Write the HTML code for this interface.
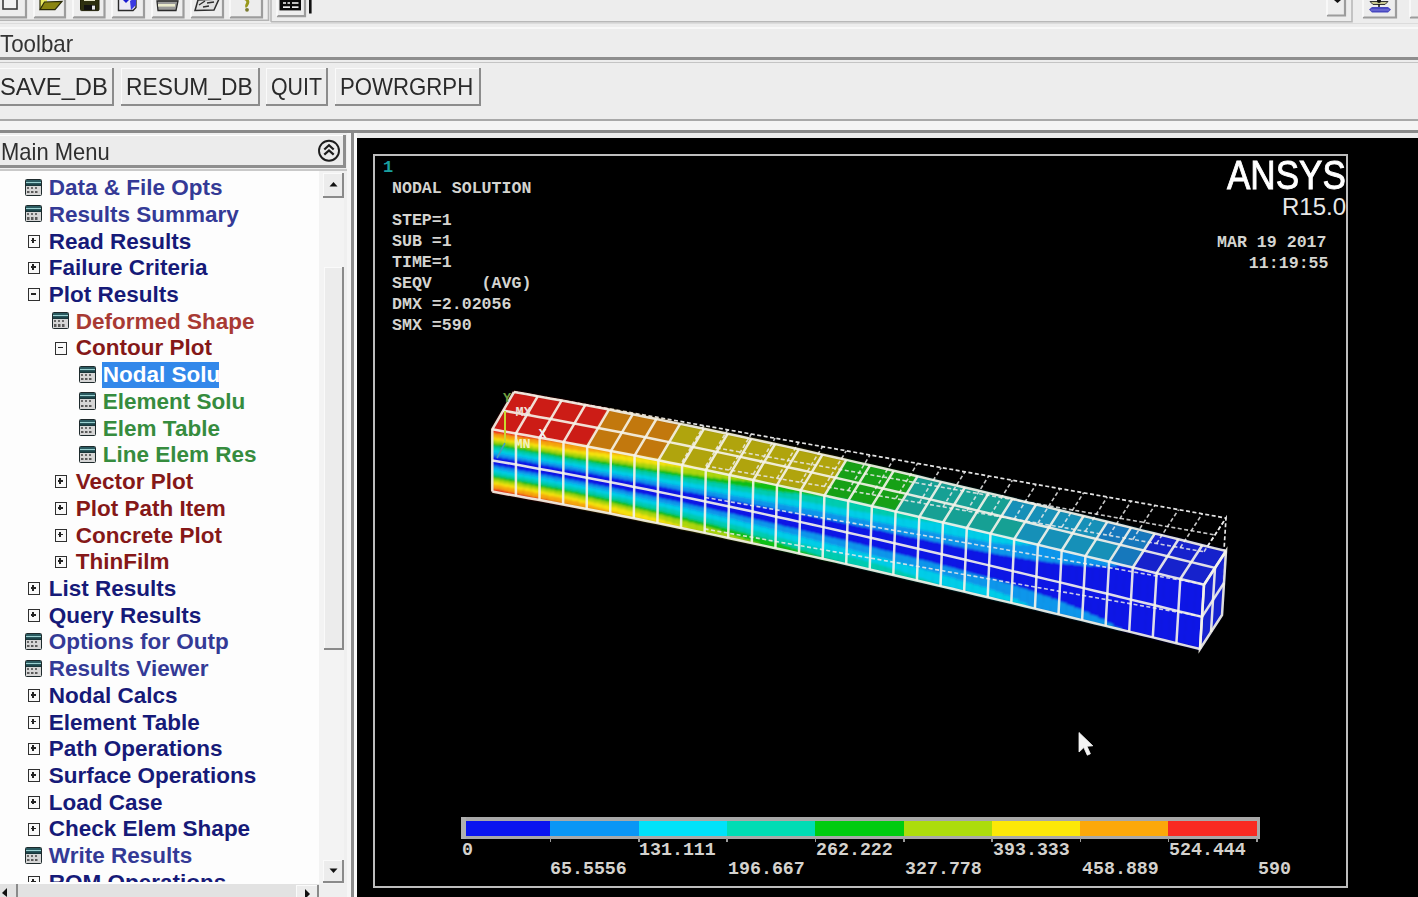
<!DOCTYPE html>
<html><head><meta charset="utf-8">
<style>
*{margin:0;padding:0;box-sizing:border-box}
html,body{width:1418px;height:897px;overflow:hidden;background:#ededed;font-family:"Liberation Sans",sans-serif;position:relative}
.a{position:absolute}
.tb{position:absolute;top:-6px;height:24px;width:33px;background:#ededed;border-right:3px solid #9a9a9a;border-bottom:3px solid #9a9a9a;box-shadow:inset 1px 1px 0 #fff}
.hl{position:absolute;left:0;width:1418px}
.btn{position:absolute;top:68px;height:38px;background:#ececec;border-right:2.5px solid #8c8c8c;border-bottom:2.5px solid #8c8c8c;box-shadow:inset 1px 1px 0 #fafafa}
.lbl{position:absolute;top:75px;font-size:24px;line-height:24px;color:#2a2a2a;white-space:nowrap;transform-origin:0 0}
.mi{position:absolute;font-weight:bold;font-size:22.5px;white-space:nowrap;line-height:26px}
.nv{color:#161a78}
.bl{color:#343a96}
.dr{color:#851818}
.lr{color:#a83a34}
.gr{color:#368c3e}
.ic{position:absolute;width:17px;height:17.3px;border:1.7px solid #1e2a2c;border-radius:1.5px;background:linear-gradient(to bottom,#2a5a60 0,#2a5a60 1.6px,#9ad0d0 1.6px,#9ad0d0 3.2px,#2a5a60 3.2px,#163438 5.6px,#d6d6d6 5.6px,#d6d6d6 100%)}
.ic:before{content:"";position:absolute;left:1.2px;top:7px;width:11px;height:2px;background:repeating-linear-gradient(to right,#6a6a6a 0,#6a6a6a 2px,transparent 2.2px,transparent 4px)}
.ic:after{content:"";position:absolute;left:1.2px;top:11.3px;width:11px;height:2.2px;background:repeating-linear-gradient(to right,#5a5a5a 0,#5a5a5a 2.4px,transparent 2.6px,transparent 4px)}
.pb{position:absolute;width:12.5px;height:12.8px;border:1.8px solid #303030;background:#f8f8f8}
.pb:before{content:"";position:absolute;left:2px;top:3.8px;width:5.3px;height:1.8px;background:#222}
.pb.p:after{content:"";position:absolute;left:3.75px;top:1.8px;width:1.8px;height:5.6px;background:#222}
.mono{font-family:"Liberation Mono",monospace;color:#d4d4d0;font-size:15px;position:absolute;white-space:pre;line-height:21px;font-weight:bold}
</style></head><body>

<!-- top toolbar -->
<svg class="a" style="left:0;top:0" width="1418" height="26" viewBox="0 0 1418 26">
<rect x="0" y="0" width="1418" height="26" fill="#ededed"/>
<g fill="none">
<!-- button frames: right/bottom shadows -->
<g stroke="#9c9c9c" stroke-width="2.2">
<path d="M26,0 V17.3 H-2"/>
<path d="M65,0 V17.3 H34"/>
<path d="M104.5,0 V17.3 H73"/>
<path d="M144,0 V17.3 H112"/>
<path d="M183.5,0 V17.3 H152"/>
<path d="M223,0 V17.3 H191"/>
<path d="M262,0 V17.3 H230"/>
<path d="M305,0 V16.2 H277"/>
<path d="M1345,0 V15.5 H1327"/>
<path d="M1396,0 V17.5 H1363"/>
<path d="M1420,0 V17.5 H1410"/>
</g>
<g stroke="#ffffff" stroke-width="1.2">
<path d="M-2,0.5 V0 M34,17 V0 M73,17 V0 M112,17 V0 M152,17 V0 M191,17 V0 M230,17 V0 M277,16 V0 M1327,15 V0 M1363,17 V0 M1410,17 V0"/>
</g>
<path d="M0,20.3 H268.5 V0" stroke="#b4b4b4" stroke-width="1.6"/>
<path d="M271,21.7 V0 M271,21.7 H1352 V0" stroke="#b8b8b8" stroke-width="1.6"/>
<path d="M0,23.5 H1418" stroke="#dcdcdc" stroke-width="1.2"/>
</g>
<!-- new doc -->
<rect x="3" y="-4" width="14" height="13" fill="#f2f2f2" stroke="#3a3a3a" stroke-width="1.6"/>
<!-- open folder -->
<path d="M40,-2 L47,-2 L47,9.5 L40,9.5 Z" fill="#e8e860"/>
<path d="M40,9.6 L44.5,2 L62,1.5 L55,9.6 Z" fill="#8a8410" stroke="#2a2a08" stroke-width="1.2"/>
<path d="M40,-1 V9.6" stroke="#2a2a08" stroke-width="1.2"/>
<!-- floppy -->
<rect x="80.5" y="-3" width="18.5" height="13.6" rx="1" fill="#2e3010" stroke="#202008" stroke-width="1"/>
<rect x="84" y="-3" width="11" height="4" fill="#e6e6c8"/>
<rect x="84" y="5" width="11.5" height="5" fill="#111"/>
<rect x="92" y="5.6" width="3" height="4" fill="#e8e8e8"/>
<!-- doc blue -->
<path d="M118.5,-2 H136 V7.5 L133,10.5 H118.5 Z" fill="#eceaf4" stroke="#2a2a2a" stroke-width="1.4"/>
<path d="M123,0 L126,-3 L129,0 L126,3 Z" fill="#1a1ad0"/>
<path d="M130,1 L136,-3 V5 L131,10 Z" fill="#3a3ae0"/>
<!-- printer -->
<path d="M157,1 H178 L176,10.5 H158 Z" fill="#9a9a9a" stroke="#2a2a2a" stroke-width="1.3"/>
<rect x="158" y="4" width="17" height="2.6" fill="#eaeacc"/>
<path d="M158,0 H178" stroke="#444" stroke-width="1.5"/>
<!-- notepad -->
<path d="M198,0 L219,-1 L214,10 L195,10.5 Z" fill="#e0e0e0" stroke="#2e2e2e" stroke-width="1.5"/>
<path d="M199,5 L205,1 M203,7 L209,6 M207,3 L214,2" stroke="#2e2e2e" stroke-width="1.4"/>
<!-- question -->
<path d="M243.5,-2 Q249,0 247.5,3.5 Q246,6 247,7" stroke="#98981a" stroke-width="3" fill="none"/>
<circle cx="247" cy="9.8" r="1.9" fill="#7a7a30"/>
<!-- grid icon -->
<rect x="279.5" y="-2" width="21.5" height="12.4" fill="#0c0c0c"/>
<rect x="283" y="2.2" width="3" height="1.6" fill="#eee"/><rect x="287.5" y="2.2" width="2.5" height="1.6" fill="#eee"/><rect x="292" y="2.2" width="6.5" height="1.6" fill="#eee"/>
<rect x="283" y="6.3" width="7" height="1.7" fill="#eee"/><rect x="292" y="6.3" width="6.5" height="1.7" fill="#eee"/>
<rect x="309" y="0" width="2.6" height="13.5" fill="#111"/>
<!-- dropdown arrow -->
<path d="M1334,0 L1341,0 L1337.5,3 Z" fill="#111"/>
<!-- layers icon -->
<path d="M1370,1.5 L1388,1.5 L1385,4.5 L1373,4.5 Z" fill="#c8c890" stroke="#333" stroke-width="1"/>
<circle cx="1379" cy="1" r="2" fill="#111"/>
<path d="M1379,4 V9" stroke="#111" stroke-width="1.5"/>
<path d="M1369,9.5 L1372,7 H1388 L1391,9.5 L1388,12.5 H1372 Z" fill="#4848c0"/>
<path d="M1371,10 H1389" stroke="#8080e0" stroke-width="1"/>
</svg>
<div class="hl" style="top:27px;height:2px;background:#f8f8f8"></div>
<div class="a" style="left:0;top:31.7px;font-size:24px;color:#333;line-height:24px;transform:scaleX(0.93);transform-origin:0 0">Toolbar</div>
<div class="hl" style="top:57px;height:2.5px;background:#8e8e8e"></div>
<div class="hl" style="top:61.5px;height:1.5px;background:#c4c4c4"></div>

<div class="btn" style="left:-3px;width:117px"></div>
<div class="btn" style="left:121px;width:139px"></div>
<div class="btn" style="left:266px;width:62px"></div>
<div class="btn" style="left:334.5px;width:146px"></div>
<div class="lbl" style="left:-0.5px;transform:scaleX(0.99)">SAVE_DB</div>
<div class="lbl" style="left:125.5px;transform:scaleX(0.95)">RESUM_DB</div>
<div class="lbl" style="left:271px;transform:scaleX(0.89)">QUIT</div>
<div class="lbl" style="left:339.5px;transform:scaleX(0.925)">POWRGRPH</div>
<div class="hl" style="top:119px;height:2px;background:#a8a8a8"></div>
<div class="hl" style="top:121px;height:9px;background:#f4f4f4"></div>
<div class="hl" style="top:130px;height:3px;background:#8a8a8a"></div>

<!-- main menu header -->
<div class="a" style="left:0;top:133px;width:352px;height:764px;background:#efefef"></div>
<div class="a" style="left:-2px;top:135px;width:348px;height:33px;background:#ececec;border-right:3px solid #8e8e8e;border-bottom:3px solid #8e8e8e;box-shadow:inset 1px 1px 0 #fff"></div>
<div class="a" style="left:0.5px;top:139.7px;font-size:24px;color:#2f2f2f;line-height:24px;transform:scaleX(0.915);transform-origin:0 0">Main Menu</div>
<svg class="a" style="left:317px;top:139px" width="24" height="24" viewBox="0 0 24 24"><circle cx="12" cy="11.7" r="10" fill="none" stroke="#1e1e1e" stroke-width="1.9"/><path d="M7.3,10.5 L12,6.3 L16.7,10.5 M7.3,15.6 L12,11.4 L16.7,15.6" fill="none" stroke="#1e1e1e" stroke-width="2.2"/></svg>

<!-- menu list -->
<div class="a" style="left:0;top:168.5px;width:347px;height:2px;background:#c9c9c9"></div>
<div class="a" style="left:0;top:170.5px;width:319px;height:713px;background:#fdfdfd"></div>
<div class="a" style="left:319px;top:170.5px;width:25px;height:713px;background:#f3f3f3"></div>
<div class="a" style="left:323px;top:172.5px;width:21px;height:25px;background:#ececec;border-right:2.5px solid #8a8a8a;border-bottom:2.5px solid #8a8a8a;box-shadow:inset 1px 1px 0 #fafafa"></div>
<svg class="a" style="left:328px;top:180px" width="11" height="8"><path d="M1.5,6.5 L5.5,2 L9.5,6.5 Z" fill="#111"/></svg>
<div class="a" style="left:324px;top:267px;width:20px;height:383px;background:#ececec;border-right:2.5px solid #8a8a8a;border-bottom:2.5px solid #8a8a8a;box-shadow:inset 1px 1px 0 #fafafa"></div>
<div class="a" style="left:323px;top:859.5px;width:21px;height:23px;background:#ececec;border-right:2.5px solid #8a8a8a;border-bottom:2.5px solid #8a8a8a;box-shadow:inset 1px 1px 0 #fafafa"></div>
<svg class="a" style="left:328px;top:867px" width="11" height="8"><path d="M1.5,1.5 L5.5,6 L9.5,1.5 Z" fill="#111"/></svg>
<div class="a" style="left:0;top:884px;width:319px;height:13px;background:#e2e2e2"></div>
<div class="a" style="left:16px;top:884px;width:2px;height:13px;background:#8a8a8a"></div>
<svg class="a" style="left:0;top:884px" width="12" height="13"><path d="M2,9 L7,4 L7,13 Z" fill="#111"/></svg>
<div class="a" style="left:295.5px;top:884.5px;width:23px;height:13px;background:#ececec;border-right:2.5px solid #8a8a8a;box-shadow:inset 1px 1px 0 #fafafa"></div>
<svg class="a" style="left:302px;top:888px" width="10" height="10"><path d="M3,1 L8,6 L3,11 Z" fill="#111"/></svg>
<div class="a" style="left:346.5px;top:133px;width:4.5px;height:764px;background:#f6f6f6"></div>
<div class="a" style="left:351px;top:133px;width:2.6px;height:764px;background:#8c8c8c"></div>
<div class="a" style="left:353.6px;top:133px;width:3.4px;height:764px;background:#fbfbfb"></div>
<div class="a" style="left:0;top:170px;width:319px;height:712px;overflow:hidden"><div class="a" style="left:0;top:-170px;width:319px;height:897px">
<div class="ic" style="left:24.5px;top:178.5px"></div>
<div class="mi bl" style="left:48.8px;top:175.1px">Data &amp; File Opts</div>
<div class="ic" style="left:24.5px;top:205.2px"></div>
<div class="mi bl" style="left:48.8px;top:201.8px">Results Summary</div>
<div class="pb p" style="left:27.5px;top:234.9px"></div>
<div class="mi nv" style="left:48.8px;top:228.5px">Read Results</div>
<div class="pb p" style="left:27.5px;top:261.7px"></div>
<div class="mi nv" style="left:48.8px;top:255.3px">Failure Criteria</div>
<div class="pb" style="left:27.5px;top:288.4px"></div>
<div class="mi nv" style="left:48.8px;top:282.0px">Plot Results</div>
<div class="ic" style="left:51.5px;top:312.1px"></div>
<div class="mi lr" style="left:75.8px;top:308.7px">Deformed Shape</div>
<div class="pb" style="left:54.5px;top:341.8px"></div>
<div class="mi dr" style="left:75.8px;top:335.4px">Contour Plot</div>
<div class="ic" style="left:78.5px;top:365.5px"></div>
<div class="a" style="left:101.8px;top:361.8px;width:117px;height:26px;background:#3388ea"></div>
<div class="mi" style="left:102.8px;top:362.1px;color:#fff">Nodal Solu</div>
<div class="ic" style="left:78.5px;top:392.3px"></div>
<div class="mi gr" style="left:102.8px;top:388.9px">Element Solu</div>
<div class="ic" style="left:78.5px;top:419.0px"></div>
<div class="mi gr" style="left:102.8px;top:415.6px">Elem Table</div>
<div class="ic" style="left:78.5px;top:445.7px"></div>
<div class="mi gr" style="left:102.8px;top:442.3px">Line Elem Res</div>
<div class="pb p" style="left:54.5px;top:475.4px"></div>
<div class="mi dr" style="left:75.8px;top:469.0px">Vector Plot</div>
<div class="pb p" style="left:54.5px;top:502.1px"></div>
<div class="mi dr" style="left:75.8px;top:495.7px">Plot Path Item</div>
<div class="pb p" style="left:54.5px;top:528.9px"></div>
<div class="mi dr" style="left:75.8px;top:522.5px">Concrete Plot</div>
<div class="pb p" style="left:54.5px;top:555.6px"></div>
<div class="mi dr" style="left:75.8px;top:549.2px">ThinFilm</div>
<div class="pb p" style="left:27.5px;top:582.3px"></div>
<div class="mi nv" style="left:48.8px;top:575.9px">List Results</div>
<div class="pb p" style="left:27.5px;top:609.0px"></div>
<div class="mi nv" style="left:48.8px;top:602.6px">Query Results</div>
<div class="ic" style="left:24.5px;top:632.7px"></div>
<div class="mi bl" style="left:48.8px;top:629.3px">Options for Outp</div>
<div class="ic" style="left:24.5px;top:659.5px"></div>
<div class="mi bl" style="left:48.8px;top:656.1px">Results Viewer</div>
<div class="pb p" style="left:27.5px;top:689.2px"></div>
<div class="mi nv" style="left:48.8px;top:682.8px">Nodal Calcs</div>
<div class="pb p" style="left:27.5px;top:715.9px"></div>
<div class="mi nv" style="left:48.8px;top:709.5px">Element Table</div>
<div class="pb p" style="left:27.5px;top:742.6px"></div>
<div class="mi nv" style="left:48.8px;top:736.2px">Path Operations</div>
<div class="pb p" style="left:27.5px;top:769.3px"></div>
<div class="mi nv" style="left:48.8px;top:762.9px">Surface Operations</div>
<div class="pb p" style="left:27.5px;top:796.1px"></div>
<div class="mi nv" style="left:48.8px;top:789.7px">Load Case</div>
<div class="pb p" style="left:27.5px;top:822.8px"></div>
<div class="mi nv" style="left:48.8px;top:816.4px">Check Elem Shape</div>
<div class="ic" style="left:24.5px;top:846.5px"></div>
<div class="mi bl" style="left:48.8px;top:843.1px">Write Results</div>
<div class="pb p" style="left:27.5px;top:876.2px"></div>
<div class="mi nv" style="left:48.8px;top:869.8px">ROM Operations</div>

</div></div>
<!-- graphics -->
<div class="a" style="left:357px;top:138px;width:1061px;height:759px;background:#000"></div>
<div class="a" style="left:373px;top:154px;width:975px;height:734px;border:2px solid #bdbdbd"></div>


<div class="a" style="left:383px;top:158.5px;font-family:'Liberation Mono',monospace;font-size:17px;color:#1aa0a0;line-height:17px;font-weight:bold">1</div>
<div class="mono" style="left:392px;top:179.5px;font-size:16.6px;line-height:17px">NODAL SOLUTION</div>
<div class="mono" style="left:392px;top:210px;font-size:16.6px;line-height:21.05px">STEP=1
SUB =1
TIME=1
SEQV     (AVG)
DMX =2.02056
SMX =590</div>
<div class="a" style="left:1227px;top:152.5px;font-size:40.5px;color:#fff;line-height:44px;transform:scaleX(0.865);transform-origin:0 0;-webkit-text-stroke:0.9px #fff">ANSYS</div>
<div class="a" style="left:1282px;top:194.5px;font-size:24px;color:#e8e8e8;line-height:24px">R15.0</div>
<div class="mono" style="left:1217px;top:232px;font-size:16.6px;line-height:21px">MAR 19 2017</div>
<div class="mono" style="left:1219px;top:253px;font-size:16.6px;line-height:21px">   11:19:55</div>
<!-- legend -->
<div class="a" style="left:461px;top:817px;width:799px;height:22px;background:#a8a8a8"></div>
<div class="a" style="left:462.0px;top:821px;width:88.5px;height:15px;background:#0a14f0"></div><div class="a" style="left:550.3px;top:821px;width:88.5px;height:15px;background:#0a96f5"></div><div class="a" style="left:638.6px;top:821px;width:88.5px;height:15px;background:#00e2fa"></div><div class="a" style="left:726.9px;top:821px;width:88.5px;height:15px;background:#00dcb4"></div><div class="a" style="left:815.2px;top:821px;width:88.5px;height:15px;background:#00cc10"></div><div class="a" style="left:903.5px;top:821px;width:88.5px;height:15px;background:#acdc0c"></div><div class="a" style="left:991.8px;top:821px;width:88.5px;height:15px;background:#fce808"></div><div class="a" style="left:1080.1px;top:821px;width:88.5px;height:15px;background:#fca80a"></div><div class="a" style="left:1168.4px;top:821px;width:88.5px;height:15px;background:#f82a22"></div>
<div class="a" style="left:461px;top:817px;width:5px;height:22px;background:#b0b0b0"></div>
<div class="a" style="left:549.8px;top:838px;width:1.5px;height:4px;background:#9a9a9a"></div><div class="a" style="left:638.1px;top:838px;width:1.5px;height:4px;background:#9a9a9a"></div><div class="a" style="left:726.4px;top:838px;width:1.5px;height:4px;background:#9a9a9a"></div><div class="a" style="left:814.7px;top:838px;width:1.5px;height:4px;background:#9a9a9a"></div><div class="a" style="left:903.0px;top:838px;width:1.5px;height:4px;background:#9a9a9a"></div><div class="a" style="left:991.3px;top:838px;width:1.5px;height:4px;background:#9a9a9a"></div><div class="a" style="left:1079.6px;top:838px;width:1.5px;height:4px;background:#9a9a9a"></div><div class="a" style="left:1167.9px;top:838px;width:1.5px;height:4px;background:#9a9a9a"></div><div class="a" style="left:1256.2px;top:838px;width:1.5px;height:4px;background:#9a9a9a"></div>
<div class="mono" style="left:462px;top:841px;font-size:18.3px;line-height:18.5px;color:#d4d2ce">0</div><div class="mono" style="left:639px;top:841px;font-size:18.3px;line-height:18.5px;color:#d4d2ce">131.111</div><div class="mono" style="left:816px;top:841px;font-size:18.3px;line-height:18.5px;color:#d4d2ce">262.222</div><div class="mono" style="left:993px;top:841px;font-size:18.3px;line-height:18.5px;color:#d4d2ce">393.333</div><div class="mono" style="left:1169px;top:841px;font-size:18.3px;line-height:18.5px;color:#d4d2ce">524.444</div><div class="mono" style="left:550px;top:859.5px;font-size:18.3px;line-height:18.5px;color:#d4d2ce">65.5556</div><div class="mono" style="left:728px;top:859.5px;font-size:18.3px;line-height:18.5px;color:#d4d2ce">196.667</div><div class="mono" style="left:905px;top:859.5px;font-size:18.3px;line-height:18.5px;color:#d4d2ce">327.778</div><div class="mono" style="left:1082px;top:859.5px;font-size:18.3px;line-height:18.5px;color:#d4d2ce">458.889</div><div class="mono" style="left:1258px;top:859.5px;font-size:18.3px;line-height:18.5px;color:#d4d2ce">590</div>
<!-- BEAMSTART -->
<svg class="a" style="left:0;top:0" width="1418" height="897" viewBox="0 0 1418 897">
<defs><filter id="bl" x="-5%" y="-5%" width="110%" height="110%"><feGaussianBlur stdDeviation="0.9"/></filter><filter id="bl2" x="-5%" y="-5%" width="110%" height="110%"><feGaussianBlur stdDeviation="0.45"/></filter><linearGradient id="g0" gradientUnits="userSpaceOnUse" x1="496.3" y1="430.0" x2="485.8" y2="490.5"><stop offset="0.000" stop-color="#ec2c1e"/><stop offset="0.060" stop-color="#ec2c1e"/><stop offset="0.060" stop-color="#f6a60c"/><stop offset="0.125" stop-color="#f6a60c"/><stop offset="0.125" stop-color="#f5e20a"/><stop offset="0.170" stop-color="#f5e20a"/><stop offset="0.170" stop-color="#acd60c"/><stop offset="0.220" stop-color="#acd60c"/><stop offset="0.220" stop-color="#10c018"/><stop offset="0.270" stop-color="#10c018"/><stop offset="0.270" stop-color="#00ccb0"/><stop offset="0.325" stop-color="#00ccb0"/><stop offset="0.325" stop-color="#00cde8"/><stop offset="0.375" stop-color="#00cde8"/><stop offset="0.375" stop-color="#0a96eb"/><stop offset="0.425" stop-color="#0a96eb"/><stop offset="0.425" stop-color="#0e18e6"/><stop offset="0.580" stop-color="#0e18e6"/><stop offset="0.580" stop-color="#0a96eb"/><stop offset="0.630" stop-color="#0a96eb"/><stop offset="0.630" stop-color="#00cde8"/><stop offset="0.680" stop-color="#00cde8"/><stop offset="0.680" stop-color="#00ccb0"/><stop offset="0.735" stop-color="#00ccb0"/><stop offset="0.735" stop-color="#10c018"/><stop offset="0.785" stop-color="#10c018"/><stop offset="0.785" stop-color="#acd60c"/><stop offset="0.835" stop-color="#acd60c"/><stop offset="0.835" stop-color="#f5e20a"/><stop offset="0.880" stop-color="#f5e20a"/><stop offset="0.880" stop-color="#f6a60c"/><stop offset="0.945" stop-color="#f6a60c"/><stop offset="0.945" stop-color="#ec2c1e"/><stop offset="1.000" stop-color="#ec2c1e"/></linearGradient><linearGradient id="g1" gradientUnits="userSpaceOnUse" x1="504.2" y1="431.4" x2="493.6" y2="491.8"><stop offset="0.000" stop-color="#ec2c1e"/><stop offset="0.055" stop-color="#ec2c1e"/><stop offset="0.055" stop-color="#f6a60c"/><stop offset="0.120" stop-color="#f6a60c"/><stop offset="0.120" stop-color="#f5e20a"/><stop offset="0.165" stop-color="#f5e20a"/><stop offset="0.165" stop-color="#acd60c"/><stop offset="0.215" stop-color="#acd60c"/><stop offset="0.215" stop-color="#10c018"/><stop offset="0.270" stop-color="#10c018"/><stop offset="0.270" stop-color="#00ccb0"/><stop offset="0.320" stop-color="#00ccb0"/><stop offset="0.320" stop-color="#00cde8"/><stop offset="0.370" stop-color="#00cde8"/><stop offset="0.370" stop-color="#0a96eb"/><stop offset="0.425" stop-color="#0a96eb"/><stop offset="0.425" stop-color="#0e18e6"/><stop offset="0.580" stop-color="#0e18e6"/><stop offset="0.580" stop-color="#0a96eb"/><stop offset="0.635" stop-color="#0a96eb"/><stop offset="0.635" stop-color="#00cde8"/><stop offset="0.685" stop-color="#00cde8"/><stop offset="0.685" stop-color="#00ccb0"/><stop offset="0.735" stop-color="#00ccb0"/><stop offset="0.735" stop-color="#10c018"/><stop offset="0.790" stop-color="#10c018"/><stop offset="0.790" stop-color="#acd60c"/><stop offset="0.840" stop-color="#acd60c"/><stop offset="0.840" stop-color="#f5e20a"/><stop offset="0.885" stop-color="#f5e20a"/><stop offset="0.885" stop-color="#f6a60c"/><stop offset="0.950" stop-color="#f6a60c"/><stop offset="0.950" stop-color="#ec2c1e"/><stop offset="1.000" stop-color="#ec2c1e"/></linearGradient><linearGradient id="g2" gradientUnits="userSpaceOnUse" x1="512.1" y1="432.7" x2="501.4" y2="493.2"><stop offset="0.000" stop-color="#ec2c1e"/><stop offset="0.050" stop-color="#ec2c1e"/><stop offset="0.050" stop-color="#f6a60c"/><stop offset="0.120" stop-color="#f6a60c"/><stop offset="0.120" stop-color="#f5e20a"/><stop offset="0.165" stop-color="#f5e20a"/><stop offset="0.165" stop-color="#acd60c"/><stop offset="0.215" stop-color="#acd60c"/><stop offset="0.215" stop-color="#10c018"/><stop offset="0.270" stop-color="#10c018"/><stop offset="0.270" stop-color="#00ccb0"/><stop offset="0.320" stop-color="#00ccb0"/><stop offset="0.320" stop-color="#00cde8"/><stop offset="0.370" stop-color="#00cde8"/><stop offset="0.370" stop-color="#0a96eb"/><stop offset="0.425" stop-color="#0a96eb"/><stop offset="0.425" stop-color="#0e18e6"/><stop offset="0.580" stop-color="#0e18e6"/><stop offset="0.580" stop-color="#0a96eb"/><stop offset="0.635" stop-color="#0a96eb"/><stop offset="0.635" stop-color="#00cde8"/><stop offset="0.685" stop-color="#00cde8"/><stop offset="0.685" stop-color="#00ccb0"/><stop offset="0.735" stop-color="#00ccb0"/><stop offset="0.735" stop-color="#10c018"/><stop offset="0.790" stop-color="#10c018"/><stop offset="0.790" stop-color="#acd60c"/><stop offset="0.840" stop-color="#acd60c"/><stop offset="0.840" stop-color="#f5e20a"/><stop offset="0.885" stop-color="#f5e20a"/><stop offset="0.885" stop-color="#f6a60c"/><stop offset="0.955" stop-color="#f6a60c"/><stop offset="0.955" stop-color="#ec2c1e"/><stop offset="1.000" stop-color="#ec2c1e"/></linearGradient><linearGradient id="g3" gradientUnits="userSpaceOnUse" x1="520.0" y1="434.1" x2="509.3" y2="494.6"><stop offset="0.000" stop-color="#ec2c1e"/><stop offset="0.050" stop-color="#ec2c1e"/><stop offset="0.050" stop-color="#f6a60c"/><stop offset="0.115" stop-color="#f6a60c"/><stop offset="0.115" stop-color="#f5e20a"/><stop offset="0.160" stop-color="#f5e20a"/><stop offset="0.160" stop-color="#acd60c"/><stop offset="0.215" stop-color="#acd60c"/><stop offset="0.215" stop-color="#10c018"/><stop offset="0.265" stop-color="#10c018"/><stop offset="0.265" stop-color="#00ccb0"/><stop offset="0.320" stop-color="#00ccb0"/><stop offset="0.320" stop-color="#00cde8"/><stop offset="0.370" stop-color="#00cde8"/><stop offset="0.370" stop-color="#0a96eb"/><stop offset="0.420" stop-color="#0a96eb"/><stop offset="0.420" stop-color="#0e18e6"/><stop offset="0.585" stop-color="#0e18e6"/><stop offset="0.585" stop-color="#0a96eb"/><stop offset="0.635" stop-color="#0a96eb"/><stop offset="0.635" stop-color="#00cde8"/><stop offset="0.685" stop-color="#00cde8"/><stop offset="0.685" stop-color="#00ccb0"/><stop offset="0.740" stop-color="#00ccb0"/><stop offset="0.740" stop-color="#10c018"/><stop offset="0.790" stop-color="#10c018"/><stop offset="0.790" stop-color="#acd60c"/><stop offset="0.845" stop-color="#acd60c"/><stop offset="0.845" stop-color="#f5e20a"/><stop offset="0.890" stop-color="#f5e20a"/><stop offset="0.890" stop-color="#f6a60c"/><stop offset="0.955" stop-color="#f6a60c"/><stop offset="0.955" stop-color="#ec2c1e"/><stop offset="1.000" stop-color="#ec2c1e"/></linearGradient><linearGradient id="g4" gradientUnits="userSpaceOnUse" x1="527.9" y1="435.5" x2="517.1" y2="496.0"><stop offset="0.000" stop-color="#ec2c1e"/><stop offset="0.045" stop-color="#ec2c1e"/><stop offset="0.045" stop-color="#f6a60c"/><stop offset="0.115" stop-color="#f6a60c"/><stop offset="0.115" stop-color="#f5e20a"/><stop offset="0.160" stop-color="#f5e20a"/><stop offset="0.160" stop-color="#acd60c"/><stop offset="0.210" stop-color="#acd60c"/><stop offset="0.210" stop-color="#10c018"/><stop offset="0.265" stop-color="#10c018"/><stop offset="0.265" stop-color="#00ccb0"/><stop offset="0.320" stop-color="#00ccb0"/><stop offset="0.320" stop-color="#00cde8"/><stop offset="0.370" stop-color="#00cde8"/><stop offset="0.370" stop-color="#0a96eb"/><stop offset="0.420" stop-color="#0a96eb"/><stop offset="0.420" stop-color="#0e18e6"/><stop offset="0.585" stop-color="#0e18e6"/><stop offset="0.585" stop-color="#0a96eb"/><stop offset="0.635" stop-color="#0a96eb"/><stop offset="0.635" stop-color="#00cde8"/><stop offset="0.685" stop-color="#00cde8"/><stop offset="0.685" stop-color="#00ccb0"/><stop offset="0.740" stop-color="#00ccb0"/><stop offset="0.740" stop-color="#10c018"/><stop offset="0.795" stop-color="#10c018"/><stop offset="0.795" stop-color="#acd60c"/><stop offset="0.845" stop-color="#acd60c"/><stop offset="0.845" stop-color="#f5e20a"/><stop offset="0.890" stop-color="#f5e20a"/><stop offset="0.890" stop-color="#f6a60c"/><stop offset="0.960" stop-color="#f6a60c"/><stop offset="0.960" stop-color="#ec2c1e"/><stop offset="1.000" stop-color="#ec2c1e"/></linearGradient><linearGradient id="g5" gradientUnits="userSpaceOnUse" x1="535.8" y1="437.0" x2="524.9" y2="497.4"><stop offset="0.000" stop-color="#ec2c1e"/><stop offset="0.040" stop-color="#ec2c1e"/><stop offset="0.040" stop-color="#f6a60c"/><stop offset="0.110" stop-color="#f6a60c"/><stop offset="0.110" stop-color="#f5e20a"/><stop offset="0.160" stop-color="#f5e20a"/><stop offset="0.160" stop-color="#acd60c"/><stop offset="0.210" stop-color="#acd60c"/><stop offset="0.210" stop-color="#10c018"/><stop offset="0.265" stop-color="#10c018"/><stop offset="0.265" stop-color="#00ccb0"/><stop offset="0.320" stop-color="#00ccb0"/><stop offset="0.320" stop-color="#00cde8"/><stop offset="0.370" stop-color="#00cde8"/><stop offset="0.370" stop-color="#0a96eb"/><stop offset="0.420" stop-color="#0a96eb"/><stop offset="0.420" stop-color="#0e18e6"/><stop offset="0.585" stop-color="#0e18e6"/><stop offset="0.585" stop-color="#0a96eb"/><stop offset="0.635" stop-color="#0a96eb"/><stop offset="0.635" stop-color="#00cde8"/><stop offset="0.685" stop-color="#00cde8"/><stop offset="0.685" stop-color="#00ccb0"/><stop offset="0.740" stop-color="#00ccb0"/><stop offset="0.740" stop-color="#10c018"/><stop offset="0.795" stop-color="#10c018"/><stop offset="0.795" stop-color="#acd60c"/><stop offset="0.845" stop-color="#acd60c"/><stop offset="0.845" stop-color="#f5e20a"/><stop offset="0.895" stop-color="#f5e20a"/><stop offset="0.895" stop-color="#f6a60c"/><stop offset="0.965" stop-color="#f6a60c"/><stop offset="0.965" stop-color="#ec2c1e"/><stop offset="1.000" stop-color="#ec2c1e"/></linearGradient><linearGradient id="g6" gradientUnits="userSpaceOnUse" x1="543.7" y1="438.4" x2="532.7" y2="498.8"><stop offset="0.000" stop-color="#ec2c1e"/><stop offset="0.035" stop-color="#ec2c1e"/><stop offset="0.035" stop-color="#f6a60c"/><stop offset="0.110" stop-color="#f6a60c"/><stop offset="0.110" stop-color="#f5e20a"/><stop offset="0.155" stop-color="#f5e20a"/><stop offset="0.155" stop-color="#acd60c"/><stop offset="0.205" stop-color="#acd60c"/><stop offset="0.205" stop-color="#10c018"/><stop offset="0.260" stop-color="#10c018"/><stop offset="0.260" stop-color="#00ccb0"/><stop offset="0.315" stop-color="#00ccb0"/><stop offset="0.315" stop-color="#00cde8"/><stop offset="0.370" stop-color="#00cde8"/><stop offset="0.370" stop-color="#0a96eb"/><stop offset="0.420" stop-color="#0a96eb"/><stop offset="0.420" stop-color="#0e18e6"/><stop offset="0.585" stop-color="#0e18e6"/><stop offset="0.585" stop-color="#0a96eb"/><stop offset="0.635" stop-color="#0a96eb"/><stop offset="0.635" stop-color="#00cde8"/><stop offset="0.690" stop-color="#00cde8"/><stop offset="0.690" stop-color="#00ccb0"/><stop offset="0.745" stop-color="#00ccb0"/><stop offset="0.745" stop-color="#10c018"/><stop offset="0.800" stop-color="#10c018"/><stop offset="0.800" stop-color="#acd60c"/><stop offset="0.850" stop-color="#acd60c"/><stop offset="0.850" stop-color="#f5e20a"/><stop offset="0.895" stop-color="#f5e20a"/><stop offset="0.895" stop-color="#f6a60c"/><stop offset="0.970" stop-color="#f6a60c"/><stop offset="0.970" stop-color="#ec2c1e"/><stop offset="1.000" stop-color="#ec2c1e"/></linearGradient><linearGradient id="g7" gradientUnits="userSpaceOnUse" x1="551.6" y1="439.8" x2="540.5" y2="500.3"><stop offset="0.000" stop-color="#ec2c1e"/><stop offset="0.030" stop-color="#ec2c1e"/><stop offset="0.030" stop-color="#f6a60c"/><stop offset="0.105" stop-color="#f6a60c"/><stop offset="0.105" stop-color="#f5e20a"/><stop offset="0.155" stop-color="#f5e20a"/><stop offset="0.155" stop-color="#acd60c"/><stop offset="0.205" stop-color="#acd60c"/><stop offset="0.205" stop-color="#10c018"/><stop offset="0.260" stop-color="#10c018"/><stop offset="0.260" stop-color="#00ccb0"/><stop offset="0.315" stop-color="#00ccb0"/><stop offset="0.315" stop-color="#00cde8"/><stop offset="0.370" stop-color="#00cde8"/><stop offset="0.370" stop-color="#0a96eb"/><stop offset="0.420" stop-color="#0a96eb"/><stop offset="0.420" stop-color="#0e18e6"/><stop offset="0.585" stop-color="#0e18e6"/><stop offset="0.585" stop-color="#0a96eb"/><stop offset="0.635" stop-color="#0a96eb"/><stop offset="0.635" stop-color="#00cde8"/><stop offset="0.690" stop-color="#00cde8"/><stop offset="0.690" stop-color="#00ccb0"/><stop offset="0.745" stop-color="#00ccb0"/><stop offset="0.745" stop-color="#10c018"/><stop offset="0.800" stop-color="#10c018"/><stop offset="0.800" stop-color="#acd60c"/><stop offset="0.850" stop-color="#acd60c"/><stop offset="0.850" stop-color="#f5e20a"/><stop offset="0.900" stop-color="#f5e20a"/><stop offset="0.900" stop-color="#f6a60c"/><stop offset="0.975" stop-color="#f6a60c"/><stop offset="0.975" stop-color="#ec2c1e"/><stop offset="1.000" stop-color="#ec2c1e"/></linearGradient><linearGradient id="g8" gradientUnits="userSpaceOnUse" x1="559.5" y1="441.3" x2="548.4" y2="501.7"><stop offset="0.000" stop-color="#ec2c1e"/><stop offset="0.025" stop-color="#ec2c1e"/><stop offset="0.025" stop-color="#f6a60c"/><stop offset="0.105" stop-color="#f6a60c"/><stop offset="0.105" stop-color="#f5e20a"/><stop offset="0.150" stop-color="#f5e20a"/><stop offset="0.150" stop-color="#acd60c"/><stop offset="0.205" stop-color="#acd60c"/><stop offset="0.205" stop-color="#10c018"/><stop offset="0.260" stop-color="#10c018"/><stop offset="0.260" stop-color="#00ccb0"/><stop offset="0.315" stop-color="#00ccb0"/><stop offset="0.315" stop-color="#00cde8"/><stop offset="0.365" stop-color="#00cde8"/><stop offset="0.365" stop-color="#0a96eb"/><stop offset="0.420" stop-color="#0a96eb"/><stop offset="0.420" stop-color="#0e18e6"/><stop offset="0.585" stop-color="#0e18e6"/><stop offset="0.585" stop-color="#0a96eb"/><stop offset="0.640" stop-color="#0a96eb"/><stop offset="0.640" stop-color="#00cde8"/><stop offset="0.690" stop-color="#00cde8"/><stop offset="0.690" stop-color="#00ccb0"/><stop offset="0.745" stop-color="#00ccb0"/><stop offset="0.745" stop-color="#10c018"/><stop offset="0.800" stop-color="#10c018"/><stop offset="0.800" stop-color="#acd60c"/><stop offset="0.855" stop-color="#acd60c"/><stop offset="0.855" stop-color="#f5e20a"/><stop offset="0.900" stop-color="#f5e20a"/><stop offset="0.900" stop-color="#f6a60c"/><stop offset="0.980" stop-color="#f6a60c"/><stop offset="0.980" stop-color="#ec2c1e"/><stop offset="1.000" stop-color="#ec2c1e"/></linearGradient><linearGradient id="g9" gradientUnits="userSpaceOnUse" x1="567.4" y1="442.8" x2="556.2" y2="503.2"><stop offset="0.000" stop-color="#ec2c1e"/><stop offset="0.020" stop-color="#ec2c1e"/><stop offset="0.020" stop-color="#f6a60c"/><stop offset="0.100" stop-color="#f6a60c"/><stop offset="0.100" stop-color="#f5e20a"/><stop offset="0.150" stop-color="#f5e20a"/><stop offset="0.150" stop-color="#acd60c"/><stop offset="0.200" stop-color="#acd60c"/><stop offset="0.200" stop-color="#10c018"/><stop offset="0.255" stop-color="#10c018"/><stop offset="0.255" stop-color="#00ccb0"/><stop offset="0.315" stop-color="#00ccb0"/><stop offset="0.315" stop-color="#00cde8"/><stop offset="0.365" stop-color="#00cde8"/><stop offset="0.365" stop-color="#0a96eb"/><stop offset="0.420" stop-color="#0a96eb"/><stop offset="0.420" stop-color="#0e18e6"/><stop offset="0.585" stop-color="#0e18e6"/><stop offset="0.585" stop-color="#0a96eb"/><stop offset="0.640" stop-color="#0a96eb"/><stop offset="0.640" stop-color="#00cde8"/><stop offset="0.690" stop-color="#00cde8"/><stop offset="0.690" stop-color="#00ccb0"/><stop offset="0.750" stop-color="#00ccb0"/><stop offset="0.750" stop-color="#10c018"/><stop offset="0.805" stop-color="#10c018"/><stop offset="0.805" stop-color="#acd60c"/><stop offset="0.855" stop-color="#acd60c"/><stop offset="0.855" stop-color="#f5e20a"/><stop offset="0.905" stop-color="#f5e20a"/><stop offset="0.905" stop-color="#f6a60c"/><stop offset="0.985" stop-color="#f6a60c"/><stop offset="0.985" stop-color="#ec2c1e"/><stop offset="1.000" stop-color="#ec2c1e"/></linearGradient><linearGradient id="g10" gradientUnits="userSpaceOnUse" x1="575.3" y1="444.2" x2="564.0" y2="504.6"><stop offset="0.000" stop-color="#ec2c1e"/><stop offset="0.010" stop-color="#ec2c1e"/><stop offset="0.010" stop-color="#f6a60c"/><stop offset="0.095" stop-color="#f6a60c"/><stop offset="0.095" stop-color="#f5e20a"/><stop offset="0.145" stop-color="#f5e20a"/><stop offset="0.145" stop-color="#acd60c"/><stop offset="0.200" stop-color="#acd60c"/><stop offset="0.200" stop-color="#10c018"/><stop offset="0.255" stop-color="#10c018"/><stop offset="0.255" stop-color="#00ccb0"/><stop offset="0.310" stop-color="#00ccb0"/><stop offset="0.310" stop-color="#00cde8"/><stop offset="0.365" stop-color="#00cde8"/><stop offset="0.365" stop-color="#0a96eb"/><stop offset="0.420" stop-color="#0a96eb"/><stop offset="0.420" stop-color="#0e18e6"/><stop offset="0.585" stop-color="#0e18e6"/><stop offset="0.585" stop-color="#0a96eb"/><stop offset="0.640" stop-color="#0a96eb"/><stop offset="0.640" stop-color="#00cde8"/><stop offset="0.695" stop-color="#00cde8"/><stop offset="0.695" stop-color="#00ccb0"/><stop offset="0.750" stop-color="#00ccb0"/><stop offset="0.750" stop-color="#10c018"/><stop offset="0.805" stop-color="#10c018"/><stop offset="0.805" stop-color="#acd60c"/><stop offset="0.860" stop-color="#acd60c"/><stop offset="0.860" stop-color="#f5e20a"/><stop offset="0.910" stop-color="#f5e20a"/><stop offset="0.910" stop-color="#f6a60c"/><stop offset="0.995" stop-color="#f6a60c"/><stop offset="0.995" stop-color="#ec2c1e"/><stop offset="1.000" stop-color="#ec2c1e"/></linearGradient><linearGradient id="g11" gradientUnits="userSpaceOnUse" x1="583.2" y1="445.7" x2="571.8" y2="506.1"><stop offset="0.000" stop-color="#f6a60c"/><stop offset="0.085" stop-color="#f6a60c"/><stop offset="0.085" stop-color="#f5e20a"/><stop offset="0.140" stop-color="#f5e20a"/><stop offset="0.140" stop-color="#acd60c"/><stop offset="0.195" stop-color="#acd60c"/><stop offset="0.195" stop-color="#10c018"/><stop offset="0.250" stop-color="#10c018"/><stop offset="0.250" stop-color="#00ccb0"/><stop offset="0.310" stop-color="#00ccb0"/><stop offset="0.310" stop-color="#00cde8"/><stop offset="0.365" stop-color="#00cde8"/><stop offset="0.365" stop-color="#0a96eb"/><stop offset="0.420" stop-color="#0a96eb"/><stop offset="0.420" stop-color="#0e18e6"/><stop offset="0.585" stop-color="#0e18e6"/><stop offset="0.585" stop-color="#0a96eb"/><stop offset="0.640" stop-color="#0a96eb"/><stop offset="0.640" stop-color="#00cde8"/><stop offset="0.695" stop-color="#00cde8"/><stop offset="0.695" stop-color="#00ccb0"/><stop offset="0.755" stop-color="#00ccb0"/><stop offset="0.755" stop-color="#10c018"/><stop offset="0.810" stop-color="#10c018"/><stop offset="0.810" stop-color="#acd60c"/><stop offset="0.865" stop-color="#acd60c"/><stop offset="0.865" stop-color="#f5e20a"/><stop offset="0.920" stop-color="#f5e20a"/><stop offset="0.920" stop-color="#f6a60c"/><stop offset="1.000" stop-color="#f6a60c"/></linearGradient><linearGradient id="g12" gradientUnits="userSpaceOnUse" x1="591.1" y1="447.2" x2="579.7" y2="507.6"><stop offset="0.000" stop-color="#f6a60c"/><stop offset="0.075" stop-color="#f6a60c"/><stop offset="0.075" stop-color="#f5e20a"/><stop offset="0.135" stop-color="#f5e20a"/><stop offset="0.135" stop-color="#acd60c"/><stop offset="0.190" stop-color="#acd60c"/><stop offset="0.190" stop-color="#10c018"/><stop offset="0.245" stop-color="#10c018"/><stop offset="0.245" stop-color="#00ccb0"/><stop offset="0.305" stop-color="#00ccb0"/><stop offset="0.305" stop-color="#00cde8"/><stop offset="0.360" stop-color="#00cde8"/><stop offset="0.360" stop-color="#0a96eb"/><stop offset="0.415" stop-color="#0a96eb"/><stop offset="0.415" stop-color="#0e18e6"/><stop offset="0.590" stop-color="#0e18e6"/><stop offset="0.590" stop-color="#0a96eb"/><stop offset="0.645" stop-color="#0a96eb"/><stop offset="0.645" stop-color="#00cde8"/><stop offset="0.700" stop-color="#00cde8"/><stop offset="0.700" stop-color="#00ccb0"/><stop offset="0.760" stop-color="#00ccb0"/><stop offset="0.760" stop-color="#10c018"/><stop offset="0.815" stop-color="#10c018"/><stop offset="0.815" stop-color="#acd60c"/><stop offset="0.870" stop-color="#acd60c"/><stop offset="0.870" stop-color="#f5e20a"/><stop offset="0.930" stop-color="#f5e20a"/><stop offset="0.930" stop-color="#f6a60c"/><stop offset="1.000" stop-color="#f6a60c"/></linearGradient><linearGradient id="g13" gradientUnits="userSpaceOnUse" x1="599.1" y1="448.7" x2="587.5" y2="509.1"><stop offset="0.000" stop-color="#f6a60c"/><stop offset="0.065" stop-color="#f6a60c"/><stop offset="0.065" stop-color="#f5e20a"/><stop offset="0.130" stop-color="#f5e20a"/><stop offset="0.130" stop-color="#acd60c"/><stop offset="0.185" stop-color="#acd60c"/><stop offset="0.185" stop-color="#10c018"/><stop offset="0.245" stop-color="#10c018"/><stop offset="0.245" stop-color="#00ccb0"/><stop offset="0.300" stop-color="#00ccb0"/><stop offset="0.300" stop-color="#00cde8"/><stop offset="0.360" stop-color="#00cde8"/><stop offset="0.360" stop-color="#0a96eb"/><stop offset="0.415" stop-color="#0a96eb"/><stop offset="0.415" stop-color="#0e18e6"/><stop offset="0.590" stop-color="#0e18e6"/><stop offset="0.590" stop-color="#0a96eb"/><stop offset="0.645" stop-color="#0a96eb"/><stop offset="0.645" stop-color="#00cde8"/><stop offset="0.705" stop-color="#00cde8"/><stop offset="0.705" stop-color="#00ccb0"/><stop offset="0.760" stop-color="#00ccb0"/><stop offset="0.760" stop-color="#10c018"/><stop offset="0.820" stop-color="#10c018"/><stop offset="0.820" stop-color="#acd60c"/><stop offset="0.875" stop-color="#acd60c"/><stop offset="0.875" stop-color="#f5e20a"/><stop offset="0.940" stop-color="#f5e20a"/><stop offset="0.940" stop-color="#f6a60c"/><stop offset="1.000" stop-color="#f6a60c"/></linearGradient><linearGradient id="g14" gradientUnits="userSpaceOnUse" x1="607.0" y1="450.2" x2="595.3" y2="510.6"><stop offset="0.000" stop-color="#f6a60c"/><stop offset="0.055" stop-color="#f6a60c"/><stop offset="0.055" stop-color="#f5e20a"/><stop offset="0.125" stop-color="#f5e20a"/><stop offset="0.125" stop-color="#acd60c"/><stop offset="0.180" stop-color="#acd60c"/><stop offset="0.180" stop-color="#10c018"/><stop offset="0.240" stop-color="#10c018"/><stop offset="0.240" stop-color="#00ccb0"/><stop offset="0.300" stop-color="#00ccb0"/><stop offset="0.300" stop-color="#00cde8"/><stop offset="0.355" stop-color="#00cde8"/><stop offset="0.355" stop-color="#0a96eb"/><stop offset="0.415" stop-color="#0a96eb"/><stop offset="0.415" stop-color="#0e18e6"/><stop offset="0.590" stop-color="#0e18e6"/><stop offset="0.590" stop-color="#0a96eb"/><stop offset="0.650" stop-color="#0a96eb"/><stop offset="0.650" stop-color="#00cde8"/><stop offset="0.705" stop-color="#00cde8"/><stop offset="0.705" stop-color="#00ccb0"/><stop offset="0.765" stop-color="#00ccb0"/><stop offset="0.765" stop-color="#10c018"/><stop offset="0.825" stop-color="#10c018"/><stop offset="0.825" stop-color="#acd60c"/><stop offset="0.880" stop-color="#acd60c"/><stop offset="0.880" stop-color="#f5e20a"/><stop offset="0.950" stop-color="#f5e20a"/><stop offset="0.950" stop-color="#f6a60c"/><stop offset="1.000" stop-color="#f6a60c"/></linearGradient><linearGradient id="g15" gradientUnits="userSpaceOnUse" x1="614.9" y1="451.8" x2="603.2" y2="512.1"><stop offset="0.000" stop-color="#f6a60c"/><stop offset="0.045" stop-color="#f6a60c"/><stop offset="0.045" stop-color="#f5e20a"/><stop offset="0.120" stop-color="#f5e20a"/><stop offset="0.120" stop-color="#acd60c"/><stop offset="0.175" stop-color="#acd60c"/><stop offset="0.175" stop-color="#10c018"/><stop offset="0.235" stop-color="#10c018"/><stop offset="0.235" stop-color="#00ccb0"/><stop offset="0.295" stop-color="#00ccb0"/><stop offset="0.295" stop-color="#00cde8"/><stop offset="0.355" stop-color="#00cde8"/><stop offset="0.355" stop-color="#0a96eb"/><stop offset="0.415" stop-color="#0a96eb"/><stop offset="0.415" stop-color="#0e18e6"/><stop offset="0.590" stop-color="#0e18e6"/><stop offset="0.590" stop-color="#0a96eb"/><stop offset="0.650" stop-color="#0a96eb"/><stop offset="0.650" stop-color="#00cde8"/><stop offset="0.710" stop-color="#00cde8"/><stop offset="0.710" stop-color="#00ccb0"/><stop offset="0.770" stop-color="#00ccb0"/><stop offset="0.770" stop-color="#10c018"/><stop offset="0.830" stop-color="#10c018"/><stop offset="0.830" stop-color="#acd60c"/><stop offset="0.885" stop-color="#acd60c"/><stop offset="0.885" stop-color="#f5e20a"/><stop offset="0.960" stop-color="#f5e20a"/><stop offset="0.960" stop-color="#f6a60c"/><stop offset="1.000" stop-color="#f6a60c"/></linearGradient><linearGradient id="g16" gradientUnits="userSpaceOnUse" x1="622.8" y1="453.3" x2="611.0" y2="513.7"><stop offset="0.000" stop-color="#f6a60c"/><stop offset="0.030" stop-color="#f6a60c"/><stop offset="0.030" stop-color="#f5e20a"/><stop offset="0.115" stop-color="#f5e20a"/><stop offset="0.115" stop-color="#acd60c"/><stop offset="0.170" stop-color="#acd60c"/><stop offset="0.170" stop-color="#10c018"/><stop offset="0.230" stop-color="#10c018"/><stop offset="0.230" stop-color="#00ccb0"/><stop offset="0.295" stop-color="#00ccb0"/><stop offset="0.295" stop-color="#00cde8"/><stop offset="0.355" stop-color="#00cde8"/><stop offset="0.355" stop-color="#0a96eb"/><stop offset="0.415" stop-color="#0a96eb"/><stop offset="0.415" stop-color="#0e18e6"/><stop offset="0.590" stop-color="#0e18e6"/><stop offset="0.590" stop-color="#0a96eb"/><stop offset="0.650" stop-color="#0a96eb"/><stop offset="0.650" stop-color="#00cde8"/><stop offset="0.710" stop-color="#00cde8"/><stop offset="0.710" stop-color="#00ccb0"/><stop offset="0.775" stop-color="#00ccb0"/><stop offset="0.775" stop-color="#10c018"/><stop offset="0.835" stop-color="#10c018"/><stop offset="0.835" stop-color="#acd60c"/><stop offset="0.890" stop-color="#acd60c"/><stop offset="0.890" stop-color="#f5e20a"/><stop offset="0.975" stop-color="#f5e20a"/><stop offset="0.975" stop-color="#f6a60c"/><stop offset="1.000" stop-color="#f6a60c"/></linearGradient><linearGradient id="g17" gradientUnits="userSpaceOnUse" x1="630.7" y1="454.9" x2="618.8" y2="515.2"><stop offset="0.000" stop-color="#f6a60c"/><stop offset="0.020" stop-color="#f6a60c"/><stop offset="0.020" stop-color="#f5e20a"/><stop offset="0.110" stop-color="#f5e20a"/><stop offset="0.110" stop-color="#acd60c"/><stop offset="0.165" stop-color="#acd60c"/><stop offset="0.165" stop-color="#10c018"/><stop offset="0.225" stop-color="#10c018"/><stop offset="0.225" stop-color="#00ccb0"/><stop offset="0.290" stop-color="#00ccb0"/><stop offset="0.290" stop-color="#00cde8"/><stop offset="0.350" stop-color="#00cde8"/><stop offset="0.350" stop-color="#0a96eb"/><stop offset="0.410" stop-color="#0a96eb"/><stop offset="0.410" stop-color="#0e18e6"/><stop offset="0.595" stop-color="#0e18e6"/><stop offset="0.595" stop-color="#0a96eb"/><stop offset="0.655" stop-color="#0a96eb"/><stop offset="0.655" stop-color="#00cde8"/><stop offset="0.715" stop-color="#00cde8"/><stop offset="0.715" stop-color="#00ccb0"/><stop offset="0.780" stop-color="#00ccb0"/><stop offset="0.780" stop-color="#10c018"/><stop offset="0.840" stop-color="#10c018"/><stop offset="0.840" stop-color="#acd60c"/><stop offset="0.895" stop-color="#acd60c"/><stop offset="0.895" stop-color="#f5e20a"/><stop offset="0.985" stop-color="#f5e20a"/><stop offset="0.985" stop-color="#f6a60c"/><stop offset="1.000" stop-color="#f6a60c"/></linearGradient><linearGradient id="g18" gradientUnits="userSpaceOnUse" x1="638.6" y1="456.4" x2="626.7" y2="516.8"><stop offset="0.000" stop-color="#f6a60c"/><stop offset="0.010" stop-color="#f6a60c"/><stop offset="0.010" stop-color="#f5e20a"/><stop offset="0.100" stop-color="#f5e20a"/><stop offset="0.100" stop-color="#acd60c"/><stop offset="0.160" stop-color="#acd60c"/><stop offset="0.160" stop-color="#10c018"/><stop offset="0.220" stop-color="#10c018"/><stop offset="0.220" stop-color="#00ccb0"/><stop offset="0.285" stop-color="#00ccb0"/><stop offset="0.285" stop-color="#00cde8"/><stop offset="0.350" stop-color="#00cde8"/><stop offset="0.350" stop-color="#0a96eb"/><stop offset="0.410" stop-color="#0a96eb"/><stop offset="0.410" stop-color="#0e18e6"/><stop offset="0.595" stop-color="#0e18e6"/><stop offset="0.595" stop-color="#0a96eb"/><stop offset="0.655" stop-color="#0a96eb"/><stop offset="0.655" stop-color="#00cde8"/><stop offset="0.720" stop-color="#00cde8"/><stop offset="0.720" stop-color="#00ccb0"/><stop offset="0.785" stop-color="#00ccb0"/><stop offset="0.785" stop-color="#10c018"/><stop offset="0.845" stop-color="#10c018"/><stop offset="0.845" stop-color="#acd60c"/><stop offset="0.905" stop-color="#acd60c"/><stop offset="0.905" stop-color="#f5e20a"/><stop offset="0.995" stop-color="#f5e20a"/><stop offset="0.995" stop-color="#f6a60c"/><stop offset="1.000" stop-color="#f6a60c"/></linearGradient><linearGradient id="g19" gradientUnits="userSpaceOnUse" x1="646.5" y1="458.0" x2="634.5" y2="518.3"><stop offset="0.000" stop-color="#f5e20a"/><stop offset="0.090" stop-color="#f5e20a"/><stop offset="0.090" stop-color="#acd60c"/><stop offset="0.155" stop-color="#acd60c"/><stop offset="0.155" stop-color="#10c018"/><stop offset="0.215" stop-color="#10c018"/><stop offset="0.215" stop-color="#00ccb0"/><stop offset="0.280" stop-color="#00ccb0"/><stop offset="0.280" stop-color="#00cde8"/><stop offset="0.345" stop-color="#00cde8"/><stop offset="0.345" stop-color="#0a96eb"/><stop offset="0.410" stop-color="#0a96eb"/><stop offset="0.410" stop-color="#0e18e6"/><stop offset="0.595" stop-color="#0e18e6"/><stop offset="0.595" stop-color="#0a96eb"/><stop offset="0.660" stop-color="#0a96eb"/><stop offset="0.660" stop-color="#00cde8"/><stop offset="0.725" stop-color="#00cde8"/><stop offset="0.725" stop-color="#00ccb0"/><stop offset="0.790" stop-color="#00ccb0"/><stop offset="0.790" stop-color="#10c018"/><stop offset="0.850" stop-color="#10c018"/><stop offset="0.850" stop-color="#acd60c"/><stop offset="0.915" stop-color="#acd60c"/><stop offset="0.915" stop-color="#f5e20a"/><stop offset="1.000" stop-color="#f5e20a"/></linearGradient><linearGradient id="g20" gradientUnits="userSpaceOnUse" x1="654.4" y1="459.6" x2="642.3" y2="519.9"><stop offset="0.000" stop-color="#f5e20a"/><stop offset="0.080" stop-color="#f5e20a"/><stop offset="0.080" stop-color="#acd60c"/><stop offset="0.150" stop-color="#acd60c"/><stop offset="0.150" stop-color="#10c018"/><stop offset="0.210" stop-color="#10c018"/><stop offset="0.210" stop-color="#00ccb0"/><stop offset="0.280" stop-color="#00ccb0"/><stop offset="0.280" stop-color="#00cde8"/><stop offset="0.345" stop-color="#00cde8"/><stop offset="0.345" stop-color="#0a96eb"/><stop offset="0.410" stop-color="#0a96eb"/><stop offset="0.410" stop-color="#0e18e6"/><stop offset="0.595" stop-color="#0e18e6"/><stop offset="0.595" stop-color="#0a96eb"/><stop offset="0.660" stop-color="#0a96eb"/><stop offset="0.660" stop-color="#00cde8"/><stop offset="0.725" stop-color="#00cde8"/><stop offset="0.725" stop-color="#00ccb0"/><stop offset="0.795" stop-color="#00ccb0"/><stop offset="0.795" stop-color="#10c018"/><stop offset="0.855" stop-color="#10c018"/><stop offset="0.855" stop-color="#acd60c"/><stop offset="0.925" stop-color="#acd60c"/><stop offset="0.925" stop-color="#f5e20a"/><stop offset="1.000" stop-color="#f5e20a"/></linearGradient><linearGradient id="g21" gradientUnits="userSpaceOnUse" x1="662.3" y1="461.1" x2="650.2" y2="521.5"><stop offset="0.000" stop-color="#f5e20a"/><stop offset="0.070" stop-color="#f5e20a"/><stop offset="0.070" stop-color="#acd60c"/><stop offset="0.140" stop-color="#acd60c"/><stop offset="0.140" stop-color="#10c018"/><stop offset="0.205" stop-color="#10c018"/><stop offset="0.205" stop-color="#00ccb0"/><stop offset="0.275" stop-color="#00ccb0"/><stop offset="0.275" stop-color="#00cde8"/><stop offset="0.340" stop-color="#00cde8"/><stop offset="0.340" stop-color="#0a96eb"/><stop offset="0.405" stop-color="#0a96eb"/><stop offset="0.405" stop-color="#0e18e6"/><stop offset="0.600" stop-color="#0e18e6"/><stop offset="0.600" stop-color="#0a96eb"/><stop offset="0.665" stop-color="#0a96eb"/><stop offset="0.665" stop-color="#00cde8"/><stop offset="0.730" stop-color="#00cde8"/><stop offset="0.730" stop-color="#00ccb0"/><stop offset="0.800" stop-color="#00ccb0"/><stop offset="0.800" stop-color="#10c018"/><stop offset="0.865" stop-color="#10c018"/><stop offset="0.865" stop-color="#acd60c"/><stop offset="0.935" stop-color="#acd60c"/><stop offset="0.935" stop-color="#f5e20a"/><stop offset="1.000" stop-color="#f5e20a"/></linearGradient><linearGradient id="g22" gradientUnits="userSpaceOnUse" x1="670.2" y1="462.7" x2="658.0" y2="523.1"><stop offset="0.000" stop-color="#f5e20a"/><stop offset="0.055" stop-color="#f5e20a"/><stop offset="0.055" stop-color="#acd60c"/><stop offset="0.135" stop-color="#acd60c"/><stop offset="0.135" stop-color="#10c018"/><stop offset="0.200" stop-color="#10c018"/><stop offset="0.200" stop-color="#00ccb0"/><stop offset="0.270" stop-color="#00ccb0"/><stop offset="0.270" stop-color="#00cde8"/><stop offset="0.340" stop-color="#00cde8"/><stop offset="0.340" stop-color="#0a96eb"/><stop offset="0.405" stop-color="#0a96eb"/><stop offset="0.405" stop-color="#0e18e6"/><stop offset="0.600" stop-color="#0e18e6"/><stop offset="0.600" stop-color="#0a96eb"/><stop offset="0.665" stop-color="#0a96eb"/><stop offset="0.665" stop-color="#00cde8"/><stop offset="0.735" stop-color="#00cde8"/><stop offset="0.735" stop-color="#00ccb0"/><stop offset="0.805" stop-color="#00ccb0"/><stop offset="0.805" stop-color="#10c018"/><stop offset="0.870" stop-color="#10c018"/><stop offset="0.870" stop-color="#acd60c"/><stop offset="0.950" stop-color="#acd60c"/><stop offset="0.950" stop-color="#f5e20a"/><stop offset="1.000" stop-color="#f5e20a"/></linearGradient><linearGradient id="g23" gradientUnits="userSpaceOnUse" x1="678.1" y1="464.3" x2="665.9" y2="524.7"><stop offset="0.000" stop-color="#f5e20a"/><stop offset="0.045" stop-color="#f5e20a"/><stop offset="0.045" stop-color="#acd60c"/><stop offset="0.130" stop-color="#acd60c"/><stop offset="0.130" stop-color="#10c018"/><stop offset="0.195" stop-color="#10c018"/><stop offset="0.195" stop-color="#00ccb0"/><stop offset="0.265" stop-color="#00ccb0"/><stop offset="0.265" stop-color="#00cde8"/><stop offset="0.335" stop-color="#00cde8"/><stop offset="0.335" stop-color="#0a96eb"/><stop offset="0.405" stop-color="#0a96eb"/><stop offset="0.405" stop-color="#0e18e6"/><stop offset="0.600" stop-color="#0e18e6"/><stop offset="0.600" stop-color="#0a96eb"/><stop offset="0.670" stop-color="#0a96eb"/><stop offset="0.670" stop-color="#00cde8"/><stop offset="0.740" stop-color="#00cde8"/><stop offset="0.740" stop-color="#00ccb0"/><stop offset="0.810" stop-color="#00ccb0"/><stop offset="0.810" stop-color="#10c018"/><stop offset="0.875" stop-color="#10c018"/><stop offset="0.875" stop-color="#acd60c"/><stop offset="0.960" stop-color="#acd60c"/><stop offset="0.960" stop-color="#f5e20a"/><stop offset="1.000" stop-color="#f5e20a"/></linearGradient><linearGradient id="g24" gradientUnits="userSpaceOnUse" x1="686.0" y1="466.0" x2="673.7" y2="526.3"><stop offset="0.000" stop-color="#f5e20a"/><stop offset="0.030" stop-color="#f5e20a"/><stop offset="0.030" stop-color="#acd60c"/><stop offset="0.125" stop-color="#acd60c"/><stop offset="0.125" stop-color="#10c018"/><stop offset="0.190" stop-color="#10c018"/><stop offset="0.190" stop-color="#00ccb0"/><stop offset="0.260" stop-color="#00ccb0"/><stop offset="0.260" stop-color="#00cde8"/><stop offset="0.335" stop-color="#00cde8"/><stop offset="0.335" stop-color="#0a96eb"/><stop offset="0.405" stop-color="#0a96eb"/><stop offset="0.405" stop-color="#0e18e6"/><stop offset="0.600" stop-color="#0e18e6"/><stop offset="0.600" stop-color="#0a96eb"/><stop offset="0.670" stop-color="#0a96eb"/><stop offset="0.670" stop-color="#00cde8"/><stop offset="0.745" stop-color="#00cde8"/><stop offset="0.745" stop-color="#00ccb0"/><stop offset="0.815" stop-color="#00ccb0"/><stop offset="0.815" stop-color="#10c018"/><stop offset="0.880" stop-color="#10c018"/><stop offset="0.880" stop-color="#acd60c"/><stop offset="0.975" stop-color="#acd60c"/><stop offset="0.975" stop-color="#f5e20a"/><stop offset="1.000" stop-color="#f5e20a"/></linearGradient><linearGradient id="g25" gradientUnits="userSpaceOnUse" x1="693.9" y1="467.6" x2="681.5" y2="527.9"><stop offset="0.000" stop-color="#f5e20a"/><stop offset="0.015" stop-color="#f5e20a"/><stop offset="0.015" stop-color="#acd60c"/><stop offset="0.115" stop-color="#acd60c"/><stop offset="0.115" stop-color="#10c018"/><stop offset="0.180" stop-color="#10c018"/><stop offset="0.180" stop-color="#00ccb0"/><stop offset="0.255" stop-color="#00ccb0"/><stop offset="0.255" stop-color="#00cde8"/><stop offset="0.330" stop-color="#00cde8"/><stop offset="0.330" stop-color="#0a96eb"/><stop offset="0.400" stop-color="#0a96eb"/><stop offset="0.400" stop-color="#0e18e6"/><stop offset="0.605" stop-color="#0e18e6"/><stop offset="0.605" stop-color="#0a96eb"/><stop offset="0.675" stop-color="#0a96eb"/><stop offset="0.675" stop-color="#00cde8"/><stop offset="0.750" stop-color="#00cde8"/><stop offset="0.750" stop-color="#00ccb0"/><stop offset="0.825" stop-color="#00ccb0"/><stop offset="0.825" stop-color="#10c018"/><stop offset="0.890" stop-color="#10c018"/><stop offset="0.890" stop-color="#acd60c"/><stop offset="0.990" stop-color="#acd60c"/><stop offset="0.990" stop-color="#f5e20a"/><stop offset="1.000" stop-color="#f5e20a"/></linearGradient><linearGradient id="g26" gradientUnits="userSpaceOnUse" x1="701.9" y1="469.2" x2="689.4" y2="529.5"><stop offset="0.000" stop-color="#f5e20a"/><stop offset="0.005" stop-color="#f5e20a"/><stop offset="0.005" stop-color="#acd60c"/><stop offset="0.110" stop-color="#acd60c"/><stop offset="0.110" stop-color="#10c018"/><stop offset="0.175" stop-color="#10c018"/><stop offset="0.175" stop-color="#00ccb0"/><stop offset="0.250" stop-color="#00ccb0"/><stop offset="0.250" stop-color="#00cde8"/><stop offset="0.325" stop-color="#00cde8"/><stop offset="0.325" stop-color="#0a96eb"/><stop offset="0.400" stop-color="#0a96eb"/><stop offset="0.400" stop-color="#0e18e6"/><stop offset="0.605" stop-color="#0e18e6"/><stop offset="0.605" stop-color="#0a96eb"/><stop offset="0.680" stop-color="#0a96eb"/><stop offset="0.680" stop-color="#00cde8"/><stop offset="0.755" stop-color="#00cde8"/><stop offset="0.755" stop-color="#00ccb0"/><stop offset="0.830" stop-color="#00ccb0"/><stop offset="0.830" stop-color="#10c018"/><stop offset="0.895" stop-color="#10c018"/><stop offset="0.895" stop-color="#acd60c"/><stop offset="1.000" stop-color="#acd60c"/><stop offset="1.000" stop-color="#f5e20a"/><stop offset="1.000" stop-color="#f5e20a"/></linearGradient><linearGradient id="g27" gradientUnits="userSpaceOnUse" x1="709.8" y1="470.9" x2="697.2" y2="531.2"><stop offset="0.000" stop-color="#acd60c"/><stop offset="0.100" stop-color="#acd60c"/><stop offset="0.100" stop-color="#10c018"/><stop offset="0.170" stop-color="#10c018"/><stop offset="0.170" stop-color="#00ccb0"/><stop offset="0.245" stop-color="#00ccb0"/><stop offset="0.245" stop-color="#00cde8"/><stop offset="0.325" stop-color="#00cde8"/><stop offset="0.325" stop-color="#0a96eb"/><stop offset="0.400" stop-color="#0a96eb"/><stop offset="0.400" stop-color="#0e18e6"/><stop offset="0.605" stop-color="#0e18e6"/><stop offset="0.605" stop-color="#0a96eb"/><stop offset="0.680" stop-color="#0a96eb"/><stop offset="0.680" stop-color="#00cde8"/><stop offset="0.760" stop-color="#00cde8"/><stop offset="0.760" stop-color="#00ccb0"/><stop offset="0.835" stop-color="#00ccb0"/><stop offset="0.835" stop-color="#10c018"/><stop offset="0.905" stop-color="#10c018"/><stop offset="0.905" stop-color="#acd60c"/><stop offset="1.000" stop-color="#acd60c"/></linearGradient><linearGradient id="g28" gradientUnits="userSpaceOnUse" x1="717.7" y1="472.5" x2="705.1" y2="532.8"><stop offset="0.000" stop-color="#acd60c"/><stop offset="0.090" stop-color="#acd60c"/><stop offset="0.090" stop-color="#10c018"/><stop offset="0.165" stop-color="#10c018"/><stop offset="0.165" stop-color="#00ccb0"/><stop offset="0.240" stop-color="#00ccb0"/><stop offset="0.240" stop-color="#00cde8"/><stop offset="0.320" stop-color="#00cde8"/><stop offset="0.320" stop-color="#0a96eb"/><stop offset="0.395" stop-color="#0a96eb"/><stop offset="0.395" stop-color="#0e18e6"/><stop offset="0.610" stop-color="#0e18e6"/><stop offset="0.610" stop-color="#0a96eb"/><stop offset="0.685" stop-color="#0a96eb"/><stop offset="0.685" stop-color="#00cde8"/><stop offset="0.765" stop-color="#00cde8"/><stop offset="0.765" stop-color="#00ccb0"/><stop offset="0.840" stop-color="#00ccb0"/><stop offset="0.840" stop-color="#10c018"/><stop offset="0.915" stop-color="#10c018"/><stop offset="0.915" stop-color="#acd60c"/><stop offset="1.000" stop-color="#acd60c"/></linearGradient><linearGradient id="g29" gradientUnits="userSpaceOnUse" x1="725.6" y1="474.2" x2="712.9" y2="534.5"><stop offset="0.000" stop-color="#acd60c"/><stop offset="0.075" stop-color="#acd60c"/><stop offset="0.075" stop-color="#10c018"/><stop offset="0.155" stop-color="#10c018"/><stop offset="0.155" stop-color="#00ccb0"/><stop offset="0.235" stop-color="#00ccb0"/><stop offset="0.235" stop-color="#00cde8"/><stop offset="0.315" stop-color="#00cde8"/><stop offset="0.315" stop-color="#0a96eb"/><stop offset="0.395" stop-color="#0a96eb"/><stop offset="0.395" stop-color="#0e18e6"/><stop offset="0.610" stop-color="#0e18e6"/><stop offset="0.610" stop-color="#0a96eb"/><stop offset="0.690" stop-color="#0a96eb"/><stop offset="0.690" stop-color="#00cde8"/><stop offset="0.770" stop-color="#00cde8"/><stop offset="0.770" stop-color="#00ccb0"/><stop offset="0.850" stop-color="#00ccb0"/><stop offset="0.850" stop-color="#10c018"/><stop offset="0.930" stop-color="#10c018"/><stop offset="0.930" stop-color="#acd60c"/><stop offset="1.000" stop-color="#acd60c"/></linearGradient><linearGradient id="g30" gradientUnits="userSpaceOnUse" x1="733.5" y1="475.8" x2="720.8" y2="536.1"><stop offset="0.000" stop-color="#acd60c"/><stop offset="0.060" stop-color="#acd60c"/><stop offset="0.060" stop-color="#10c018"/><stop offset="0.150" stop-color="#10c018"/><stop offset="0.150" stop-color="#00ccb0"/><stop offset="0.230" stop-color="#00ccb0"/><stop offset="0.230" stop-color="#00cde8"/><stop offset="0.315" stop-color="#00cde8"/><stop offset="0.315" stop-color="#0a96eb"/><stop offset="0.395" stop-color="#0a96eb"/><stop offset="0.395" stop-color="#0e18e6"/><stop offset="0.610" stop-color="#0e18e6"/><stop offset="0.610" stop-color="#0a96eb"/><stop offset="0.690" stop-color="#0a96eb"/><stop offset="0.690" stop-color="#00cde8"/><stop offset="0.775" stop-color="#00cde8"/><stop offset="0.775" stop-color="#00ccb0"/><stop offset="0.855" stop-color="#00ccb0"/><stop offset="0.855" stop-color="#10c018"/><stop offset="0.945" stop-color="#10c018"/><stop offset="0.945" stop-color="#acd60c"/><stop offset="1.000" stop-color="#acd60c"/></linearGradient><linearGradient id="g31" gradientUnits="userSpaceOnUse" x1="741.4" y1="477.5" x2="728.6" y2="537.8"><stop offset="0.000" stop-color="#acd60c"/><stop offset="0.045" stop-color="#acd60c"/><stop offset="0.045" stop-color="#10c018"/><stop offset="0.145" stop-color="#10c018"/><stop offset="0.145" stop-color="#00ccb0"/><stop offset="0.225" stop-color="#00ccb0"/><stop offset="0.225" stop-color="#00cde8"/><stop offset="0.310" stop-color="#00cde8"/><stop offset="0.310" stop-color="#0a96eb"/><stop offset="0.390" stop-color="#0a96eb"/><stop offset="0.390" stop-color="#0e18e6"/><stop offset="0.615" stop-color="#0e18e6"/><stop offset="0.615" stop-color="#0a96eb"/><stop offset="0.695" stop-color="#0a96eb"/><stop offset="0.695" stop-color="#00cde8"/><stop offset="0.780" stop-color="#00cde8"/><stop offset="0.780" stop-color="#00ccb0"/><stop offset="0.860" stop-color="#00ccb0"/><stop offset="0.860" stop-color="#10c018"/><stop offset="0.960" stop-color="#10c018"/><stop offset="0.960" stop-color="#acd60c"/><stop offset="1.000" stop-color="#acd60c"/></linearGradient><linearGradient id="g32" gradientUnits="userSpaceOnUse" x1="749.3" y1="479.2" x2="736.5" y2="539.5"><stop offset="0.000" stop-color="#acd60c"/><stop offset="0.030" stop-color="#acd60c"/><stop offset="0.030" stop-color="#10c018"/><stop offset="0.135" stop-color="#10c018"/><stop offset="0.135" stop-color="#00ccb0"/><stop offset="0.215" stop-color="#00ccb0"/><stop offset="0.215" stop-color="#00cde8"/><stop offset="0.305" stop-color="#00cde8"/><stop offset="0.305" stop-color="#0a96eb"/><stop offset="0.390" stop-color="#0a96eb"/><stop offset="0.390" stop-color="#0e18e6"/><stop offset="0.615" stop-color="#0e18e6"/><stop offset="0.615" stop-color="#0a96eb"/><stop offset="0.700" stop-color="#0a96eb"/><stop offset="0.700" stop-color="#00cde8"/><stop offset="0.790" stop-color="#00cde8"/><stop offset="0.790" stop-color="#00ccb0"/><stop offset="0.870" stop-color="#00ccb0"/><stop offset="0.870" stop-color="#10c018"/><stop offset="0.975" stop-color="#10c018"/><stop offset="0.975" stop-color="#acd60c"/><stop offset="1.000" stop-color="#acd60c"/></linearGradient><linearGradient id="g33" gradientUnits="userSpaceOnUse" x1="757.2" y1="480.9" x2="744.3" y2="541.1"><stop offset="0.000" stop-color="#acd60c"/><stop offset="0.015" stop-color="#acd60c"/><stop offset="0.015" stop-color="#10c018"/><stop offset="0.125" stop-color="#10c018"/><stop offset="0.125" stop-color="#00ccb0"/><stop offset="0.210" stop-color="#00ccb0"/><stop offset="0.210" stop-color="#00cde8"/><stop offset="0.300" stop-color="#00cde8"/><stop offset="0.300" stop-color="#0a96eb"/><stop offset="0.385" stop-color="#0a96eb"/><stop offset="0.385" stop-color="#0e18e6"/><stop offset="0.620" stop-color="#0e18e6"/><stop offset="0.620" stop-color="#0a96eb"/><stop offset="0.705" stop-color="#0a96eb"/><stop offset="0.705" stop-color="#00cde8"/><stop offset="0.795" stop-color="#00cde8"/><stop offset="0.795" stop-color="#00ccb0"/><stop offset="0.880" stop-color="#00ccb0"/><stop offset="0.880" stop-color="#10c018"/><stop offset="0.990" stop-color="#10c018"/><stop offset="0.990" stop-color="#acd60c"/><stop offset="1.000" stop-color="#acd60c"/></linearGradient><linearGradient id="g34" gradientUnits="userSpaceOnUse" x1="765.1" y1="482.6" x2="752.2" y2="542.8"><stop offset="0.000" stop-color="#10c018"/><stop offset="0.120" stop-color="#10c018"/><stop offset="0.120" stop-color="#00ccb0"/><stop offset="0.205" stop-color="#00ccb0"/><stop offset="0.205" stop-color="#00cde8"/><stop offset="0.295" stop-color="#00cde8"/><stop offset="0.295" stop-color="#0a96eb"/><stop offset="0.385" stop-color="#0a96eb"/><stop offset="0.385" stop-color="#0e18e6"/><stop offset="0.620" stop-color="#0e18e6"/><stop offset="0.620" stop-color="#0a96eb"/><stop offset="0.710" stop-color="#0a96eb"/><stop offset="0.710" stop-color="#00cde8"/><stop offset="0.800" stop-color="#00cde8"/><stop offset="0.800" stop-color="#00ccb0"/><stop offset="0.885" stop-color="#00ccb0"/><stop offset="0.885" stop-color="#10c018"/><stop offset="1.000" stop-color="#10c018"/></linearGradient><linearGradient id="g35" gradientUnits="userSpaceOnUse" x1="773.0" y1="484.3" x2="760.0" y2="544.5"><stop offset="0.000" stop-color="#10c018"/><stop offset="0.110" stop-color="#10c018"/><stop offset="0.110" stop-color="#00ccb0"/><stop offset="0.195" stop-color="#00ccb0"/><stop offset="0.195" stop-color="#00cde8"/><stop offset="0.290" stop-color="#00cde8"/><stop offset="0.290" stop-color="#0a96eb"/><stop offset="0.380" stop-color="#0a96eb"/><stop offset="0.380" stop-color="#0e18e6"/><stop offset="0.625" stop-color="#0e18e6"/><stop offset="0.625" stop-color="#0a96eb"/><stop offset="0.715" stop-color="#0a96eb"/><stop offset="0.715" stop-color="#00cde8"/><stop offset="0.810" stop-color="#00cde8"/><stop offset="0.810" stop-color="#00ccb0"/><stop offset="0.895" stop-color="#00ccb0"/><stop offset="0.895" stop-color="#10c018"/><stop offset="1.000" stop-color="#10c018"/></linearGradient><linearGradient id="g36" gradientUnits="userSpaceOnUse" x1="780.9" y1="486.0" x2="767.9" y2="546.3"><stop offset="0.000" stop-color="#10c018"/><stop offset="0.100" stop-color="#10c018"/><stop offset="0.100" stop-color="#00ccb0"/><stop offset="0.185" stop-color="#00ccb0"/><stop offset="0.185" stop-color="#00cde8"/><stop offset="0.285" stop-color="#00cde8"/><stop offset="0.285" stop-color="#0a96eb"/><stop offset="0.380" stop-color="#0a96eb"/><stop offset="0.380" stop-color="#0e18e6"/><stop offset="0.625" stop-color="#0e18e6"/><stop offset="0.625" stop-color="#0a96eb"/><stop offset="0.720" stop-color="#0a96eb"/><stop offset="0.720" stop-color="#00cde8"/><stop offset="0.820" stop-color="#00cde8"/><stop offset="0.820" stop-color="#00ccb0"/><stop offset="0.905" stop-color="#00ccb0"/><stop offset="0.905" stop-color="#10c018"/><stop offset="1.000" stop-color="#10c018"/></linearGradient><linearGradient id="g37" gradientUnits="userSpaceOnUse" x1="788.8" y1="487.7" x2="775.7" y2="548.0"><stop offset="0.000" stop-color="#10c018"/><stop offset="0.085" stop-color="#10c018"/><stop offset="0.085" stop-color="#00ccb0"/><stop offset="0.180" stop-color="#00ccb0"/><stop offset="0.180" stop-color="#00cde8"/><stop offset="0.280" stop-color="#00cde8"/><stop offset="0.280" stop-color="#0a96eb"/><stop offset="0.375" stop-color="#0a96eb"/><stop offset="0.375" stop-color="#0e18e6"/><stop offset="0.630" stop-color="#0e18e6"/><stop offset="0.630" stop-color="#0a96eb"/><stop offset="0.725" stop-color="#0a96eb"/><stop offset="0.725" stop-color="#00cde8"/><stop offset="0.825" stop-color="#00cde8"/><stop offset="0.825" stop-color="#00ccb0"/><stop offset="0.920" stop-color="#00ccb0"/><stop offset="0.920" stop-color="#10c018"/><stop offset="1.000" stop-color="#10c018"/></linearGradient><linearGradient id="g38" gradientUnits="userSpaceOnUse" x1="796.7" y1="489.4" x2="783.6" y2="549.7"><stop offset="0.000" stop-color="#10c018"/><stop offset="0.065" stop-color="#10c018"/><stop offset="0.065" stop-color="#00ccb0"/><stop offset="0.170" stop-color="#00ccb0"/><stop offset="0.170" stop-color="#00cde8"/><stop offset="0.275" stop-color="#00cde8"/><stop offset="0.275" stop-color="#0a96eb"/><stop offset="0.375" stop-color="#0a96eb"/><stop offset="0.375" stop-color="#0e18e6"/><stop offset="0.630" stop-color="#0e18e6"/><stop offset="0.630" stop-color="#0a96eb"/><stop offset="0.730" stop-color="#0a96eb"/><stop offset="0.730" stop-color="#00cde8"/><stop offset="0.835" stop-color="#00cde8"/><stop offset="0.835" stop-color="#00ccb0"/><stop offset="0.940" stop-color="#00ccb0"/><stop offset="0.940" stop-color="#10c018"/><stop offset="1.000" stop-color="#10c018"/></linearGradient><linearGradient id="g39" gradientUnits="userSpaceOnUse" x1="804.7" y1="491.2" x2="791.4" y2="551.4"><stop offset="0.000" stop-color="#10c018"/><stop offset="0.055" stop-color="#10c018"/><stop offset="0.055" stop-color="#00ccb0"/><stop offset="0.165" stop-color="#00ccb0"/><stop offset="0.165" stop-color="#00cde8"/><stop offset="0.270" stop-color="#00cde8"/><stop offset="0.270" stop-color="#0a96eb"/><stop offset="0.370" stop-color="#0a96eb"/><stop offset="0.370" stop-color="#0e18e6"/><stop offset="0.635" stop-color="#0e18e6"/><stop offset="0.635" stop-color="#0a96eb"/><stop offset="0.735" stop-color="#0a96eb"/><stop offset="0.735" stop-color="#00cde8"/><stop offset="0.840" stop-color="#00cde8"/><stop offset="0.840" stop-color="#00ccb0"/><stop offset="0.950" stop-color="#00ccb0"/><stop offset="0.950" stop-color="#10c018"/><stop offset="1.000" stop-color="#10c018"/></linearGradient><linearGradient id="g40" gradientUnits="userSpaceOnUse" x1="812.6" y1="492.9" x2="799.3" y2="553.2"><stop offset="0.000" stop-color="#10c018"/><stop offset="0.045" stop-color="#10c018"/><stop offset="0.045" stop-color="#00ccb0"/><stop offset="0.160" stop-color="#00ccb0"/><stop offset="0.160" stop-color="#00cde8"/><stop offset="0.265" stop-color="#00cde8"/><stop offset="0.265" stop-color="#0a96eb"/><stop offset="0.370" stop-color="#0a96eb"/><stop offset="0.370" stop-color="#0e18e6"/><stop offset="0.635" stop-color="#0e18e6"/><stop offset="0.635" stop-color="#0a96eb"/><stop offset="0.740" stop-color="#0a96eb"/><stop offset="0.740" stop-color="#00cde8"/><stop offset="0.845" stop-color="#00cde8"/><stop offset="0.845" stop-color="#00ccb0"/><stop offset="0.960" stop-color="#00ccb0"/><stop offset="0.960" stop-color="#10c018"/><stop offset="1.000" stop-color="#10c018"/></linearGradient><linearGradient id="g41" gradientUnits="userSpaceOnUse" x1="820.5" y1="494.6" x2="807.1" y2="554.9"><stop offset="0.000" stop-color="#10c018"/><stop offset="0.035" stop-color="#10c018"/><stop offset="0.035" stop-color="#00ccb0"/><stop offset="0.155" stop-color="#00ccb0"/><stop offset="0.155" stop-color="#00cde8"/><stop offset="0.260" stop-color="#00cde8"/><stop offset="0.260" stop-color="#0a96eb"/><stop offset="0.370" stop-color="#0a96eb"/><stop offset="0.370" stop-color="#0e18e6"/><stop offset="0.635" stop-color="#0e18e6"/><stop offset="0.635" stop-color="#0a96eb"/><stop offset="0.745" stop-color="#0a96eb"/><stop offset="0.745" stop-color="#00cde8"/><stop offset="0.850" stop-color="#00cde8"/><stop offset="0.850" stop-color="#00ccb0"/><stop offset="0.970" stop-color="#00ccb0"/><stop offset="0.970" stop-color="#10c018"/><stop offset="1.000" stop-color="#10c018"/></linearGradient><linearGradient id="g42" gradientUnits="userSpaceOnUse" x1="828.4" y1="496.4" x2="815.0" y2="556.7"><stop offset="0.000" stop-color="#10c018"/><stop offset="0.020" stop-color="#10c018"/><stop offset="0.020" stop-color="#00ccb0"/><stop offset="0.150" stop-color="#00ccb0"/><stop offset="0.150" stop-color="#00cde8"/><stop offset="0.260" stop-color="#00cde8"/><stop offset="0.260" stop-color="#0a96eb"/><stop offset="0.365" stop-color="#0a96eb"/><stop offset="0.365" stop-color="#0e18e6"/><stop offset="0.640" stop-color="#0e18e6"/><stop offset="0.640" stop-color="#0a96eb"/><stop offset="0.745" stop-color="#0a96eb"/><stop offset="0.745" stop-color="#00cde8"/><stop offset="0.855" stop-color="#00cde8"/><stop offset="0.855" stop-color="#00ccb0"/><stop offset="0.985" stop-color="#00ccb0"/><stop offset="0.985" stop-color="#10c018"/><stop offset="1.000" stop-color="#10c018"/></linearGradient><linearGradient id="g43" gradientUnits="userSpaceOnUse" x1="836.3" y1="498.2" x2="822.9" y2="558.4"><stop offset="0.000" stop-color="#10c018"/><stop offset="0.010" stop-color="#10c018"/><stop offset="0.010" stop-color="#00ccb0"/><stop offset="0.145" stop-color="#00ccb0"/><stop offset="0.145" stop-color="#00cde8"/><stop offset="0.255" stop-color="#00cde8"/><stop offset="0.255" stop-color="#0a96eb"/><stop offset="0.365" stop-color="#0a96eb"/><stop offset="0.365" stop-color="#0e18e6"/><stop offset="0.640" stop-color="#0e18e6"/><stop offset="0.640" stop-color="#0a96eb"/><stop offset="0.750" stop-color="#0a96eb"/><stop offset="0.750" stop-color="#00cde8"/><stop offset="0.860" stop-color="#00cde8"/><stop offset="0.860" stop-color="#00ccb0"/><stop offset="0.995" stop-color="#00ccb0"/><stop offset="0.995" stop-color="#10c018"/><stop offset="1.000" stop-color="#10c018"/></linearGradient><linearGradient id="g44" gradientUnits="userSpaceOnUse" x1="844.2" y1="499.9" x2="830.7" y2="560.2"><stop offset="0.000" stop-color="#00ccb0"/><stop offset="0.140" stop-color="#00ccb0"/><stop offset="0.140" stop-color="#00cde8"/><stop offset="0.250" stop-color="#00cde8"/><stop offset="0.250" stop-color="#0a96eb"/><stop offset="0.365" stop-color="#0a96eb"/><stop offset="0.365" stop-color="#0e18e6"/><stop offset="0.640" stop-color="#0e18e6"/><stop offset="0.640" stop-color="#0a96eb"/><stop offset="0.755" stop-color="#0a96eb"/><stop offset="0.755" stop-color="#00cde8"/><stop offset="0.865" stop-color="#00cde8"/><stop offset="0.865" stop-color="#00ccb0"/><stop offset="1.000" stop-color="#00ccb0"/></linearGradient><linearGradient id="g45" gradientUnits="userSpaceOnUse" x1="852.1" y1="501.7" x2="838.6" y2="562.0"><stop offset="0.000" stop-color="#00ccb0"/><stop offset="0.135" stop-color="#00ccb0"/><stop offset="0.135" stop-color="#00cde8"/><stop offset="0.245" stop-color="#00cde8"/><stop offset="0.245" stop-color="#0a96eb"/><stop offset="0.360" stop-color="#0a96eb"/><stop offset="0.360" stop-color="#0e18e6"/><stop offset="0.645" stop-color="#0e18e6"/><stop offset="0.645" stop-color="#0a96eb"/><stop offset="0.760" stop-color="#0a96eb"/><stop offset="0.760" stop-color="#00cde8"/><stop offset="0.870" stop-color="#00cde8"/><stop offset="0.870" stop-color="#00ccb0"/><stop offset="1.000" stop-color="#00ccb0"/></linearGradient><linearGradient id="g46" gradientUnits="userSpaceOnUse" x1="860.0" y1="503.5" x2="846.4" y2="563.8"><stop offset="0.000" stop-color="#00ccb0"/><stop offset="0.130" stop-color="#00ccb0"/><stop offset="0.130" stop-color="#00cde8"/><stop offset="0.240" stop-color="#00cde8"/><stop offset="0.240" stop-color="#0a96eb"/><stop offset="0.360" stop-color="#0a96eb"/><stop offset="0.360" stop-color="#0e18e6"/><stop offset="0.645" stop-color="#0e18e6"/><stop offset="0.645" stop-color="#0a96eb"/><stop offset="0.765" stop-color="#0a96eb"/><stop offset="0.765" stop-color="#00cde8"/><stop offset="0.875" stop-color="#00cde8"/><stop offset="0.875" stop-color="#00ccb0"/><stop offset="1.000" stop-color="#00ccb0"/></linearGradient><linearGradient id="g47" gradientUnits="userSpaceOnUse" x1="867.9" y1="505.3" x2="854.3" y2="565.5"><stop offset="0.000" stop-color="#00ccb0"/><stop offset="0.120" stop-color="#00ccb0"/><stop offset="0.120" stop-color="#00cde8"/><stop offset="0.235" stop-color="#00cde8"/><stop offset="0.235" stop-color="#0a96eb"/><stop offset="0.355" stop-color="#0a96eb"/><stop offset="0.355" stop-color="#0e18e6"/><stop offset="0.650" stop-color="#0e18e6"/><stop offset="0.650" stop-color="#0a96eb"/><stop offset="0.770" stop-color="#0a96eb"/><stop offset="0.770" stop-color="#00cde8"/><stop offset="0.885" stop-color="#00cde8"/><stop offset="0.885" stop-color="#00ccb0"/><stop offset="1.000" stop-color="#00ccb0"/></linearGradient><linearGradient id="g48" gradientUnits="userSpaceOnUse" x1="875.8" y1="507.1" x2="862.2" y2="567.3"><stop offset="0.000" stop-color="#00ccb0"/><stop offset="0.115" stop-color="#00ccb0"/><stop offset="0.115" stop-color="#00cde8"/><stop offset="0.230" stop-color="#00cde8"/><stop offset="0.230" stop-color="#0a96eb"/><stop offset="0.355" stop-color="#0a96eb"/><stop offset="0.355" stop-color="#0e18e6"/><stop offset="0.650" stop-color="#0e18e6"/><stop offset="0.650" stop-color="#0a96eb"/><stop offset="0.775" stop-color="#0a96eb"/><stop offset="0.775" stop-color="#00cde8"/><stop offset="0.890" stop-color="#00cde8"/><stop offset="0.890" stop-color="#00ccb0"/><stop offset="1.000" stop-color="#00ccb0"/></linearGradient><linearGradient id="g49" gradientUnits="userSpaceOnUse" x1="883.7" y1="508.8" x2="870.0" y2="569.1"><stop offset="0.000" stop-color="#00ccb0"/><stop offset="0.110" stop-color="#00ccb0"/><stop offset="0.110" stop-color="#00cde8"/><stop offset="0.225" stop-color="#00cde8"/><stop offset="0.225" stop-color="#0a96eb"/><stop offset="0.350" stop-color="#0a96eb"/><stop offset="0.350" stop-color="#0e18e6"/><stop offset="0.655" stop-color="#0e18e6"/><stop offset="0.655" stop-color="#0a96eb"/><stop offset="0.780" stop-color="#0a96eb"/><stop offset="0.780" stop-color="#00cde8"/><stop offset="0.895" stop-color="#00cde8"/><stop offset="0.895" stop-color="#00ccb0"/><stop offset="1.000" stop-color="#00ccb0"/></linearGradient><linearGradient id="g50" gradientUnits="userSpaceOnUse" x1="891.6" y1="510.6" x2="877.9" y2="570.9"><stop offset="0.000" stop-color="#00ccb0"/><stop offset="0.100" stop-color="#00ccb0"/><stop offset="0.100" stop-color="#00cde8"/><stop offset="0.220" stop-color="#00cde8"/><stop offset="0.220" stop-color="#0a96eb"/><stop offset="0.350" stop-color="#0a96eb"/><stop offset="0.350" stop-color="#0e18e6"/><stop offset="0.655" stop-color="#0e18e6"/><stop offset="0.655" stop-color="#0a96eb"/><stop offset="0.785" stop-color="#0a96eb"/><stop offset="0.785" stop-color="#00cde8"/><stop offset="0.905" stop-color="#00cde8"/><stop offset="0.905" stop-color="#00ccb0"/><stop offset="1.000" stop-color="#00ccb0"/></linearGradient><linearGradient id="g51" gradientUnits="userSpaceOnUse" x1="899.6" y1="512.5" x2="885.8" y2="572.7"><stop offset="0.000" stop-color="#00ccb0"/><stop offset="0.090" stop-color="#00ccb0"/><stop offset="0.090" stop-color="#00cde8"/><stop offset="0.215" stop-color="#00cde8"/><stop offset="0.215" stop-color="#0a96eb"/><stop offset="0.345" stop-color="#0a96eb"/><stop offset="0.345" stop-color="#0e18e6"/><stop offset="0.660" stop-color="#0e18e6"/><stop offset="0.660" stop-color="#0a96eb"/><stop offset="0.790" stop-color="#0a96eb"/><stop offset="0.790" stop-color="#00cde8"/><stop offset="0.915" stop-color="#00cde8"/><stop offset="0.915" stop-color="#00ccb0"/><stop offset="1.000" stop-color="#00ccb0"/></linearGradient><linearGradient id="g52" gradientUnits="userSpaceOnUse" x1="907.5" y1="514.3" x2="893.6" y2="574.6"><stop offset="0.000" stop-color="#00ccb0"/><stop offset="0.075" stop-color="#00ccb0"/><stop offset="0.075" stop-color="#00cde8"/><stop offset="0.210" stop-color="#00cde8"/><stop offset="0.210" stop-color="#0a96eb"/><stop offset="0.345" stop-color="#0a96eb"/><stop offset="0.345" stop-color="#0e18e6"/><stop offset="0.660" stop-color="#0e18e6"/><stop offset="0.660" stop-color="#0a96eb"/><stop offset="0.795" stop-color="#0a96eb"/><stop offset="0.795" stop-color="#00cde8"/><stop offset="0.930" stop-color="#00cde8"/><stop offset="0.930" stop-color="#00ccb0"/><stop offset="1.000" stop-color="#00ccb0"/></linearGradient><linearGradient id="g53" gradientUnits="userSpaceOnUse" x1="915.4" y1="516.1" x2="901.5" y2="576.4"><stop offset="0.000" stop-color="#00ccb0"/><stop offset="0.065" stop-color="#00ccb0"/><stop offset="0.065" stop-color="#00cde8"/><stop offset="0.205" stop-color="#00cde8"/><stop offset="0.205" stop-color="#0a96eb"/><stop offset="0.340" stop-color="#0a96eb"/><stop offset="0.340" stop-color="#0e18e6"/><stop offset="0.665" stop-color="#0e18e6"/><stop offset="0.665" stop-color="#0a96eb"/><stop offset="0.800" stop-color="#0a96eb"/><stop offset="0.800" stop-color="#00cde8"/><stop offset="0.940" stop-color="#00cde8"/><stop offset="0.940" stop-color="#00ccb0"/><stop offset="1.000" stop-color="#00ccb0"/></linearGradient><linearGradient id="g54" gradientUnits="userSpaceOnUse" x1="923.3" y1="517.9" x2="909.4" y2="578.2"><stop offset="0.000" stop-color="#00ccb0"/><stop offset="0.050" stop-color="#00ccb0"/><stop offset="0.050" stop-color="#00cde8"/><stop offset="0.195" stop-color="#00cde8"/><stop offset="0.195" stop-color="#0a96eb"/><stop offset="0.335" stop-color="#0a96eb"/><stop offset="0.335" stop-color="#0e18e6"/><stop offset="0.670" stop-color="#0e18e6"/><stop offset="0.670" stop-color="#0a96eb"/><stop offset="0.810" stop-color="#0a96eb"/><stop offset="0.810" stop-color="#00cde8"/><stop offset="0.955" stop-color="#00cde8"/><stop offset="0.955" stop-color="#00ccb0"/><stop offset="1.000" stop-color="#00ccb0"/></linearGradient><linearGradient id="g55" gradientUnits="userSpaceOnUse" x1="931.2" y1="519.7" x2="917.2" y2="580.0"><stop offset="0.000" stop-color="#00ccb0"/><stop offset="0.035" stop-color="#00ccb0"/><stop offset="0.035" stop-color="#00cde8"/><stop offset="0.190" stop-color="#00cde8"/><stop offset="0.190" stop-color="#0a96eb"/><stop offset="0.335" stop-color="#0a96eb"/><stop offset="0.335" stop-color="#0e18e6"/><stop offset="0.670" stop-color="#0e18e6"/><stop offset="0.670" stop-color="#0a96eb"/><stop offset="0.815" stop-color="#0a96eb"/><stop offset="0.815" stop-color="#00cde8"/><stop offset="0.970" stop-color="#00cde8"/><stop offset="0.970" stop-color="#00ccb0"/><stop offset="1.000" stop-color="#00ccb0"/></linearGradient><linearGradient id="g56" gradientUnits="userSpaceOnUse" x1="939.1" y1="521.6" x2="925.1" y2="581.9"><stop offset="0.000" stop-color="#00ccb0"/><stop offset="0.020" stop-color="#00ccb0"/><stop offset="0.020" stop-color="#00cde8"/><stop offset="0.185" stop-color="#00cde8"/><stop offset="0.185" stop-color="#0a96eb"/><stop offset="0.330" stop-color="#0a96eb"/><stop offset="0.330" stop-color="#0e18e6"/><stop offset="0.675" stop-color="#0e18e6"/><stop offset="0.675" stop-color="#0a96eb"/><stop offset="0.820" stop-color="#0a96eb"/><stop offset="0.820" stop-color="#00cde8"/><stop offset="0.985" stop-color="#00cde8"/><stop offset="0.985" stop-color="#00ccb0"/><stop offset="1.000" stop-color="#00ccb0"/></linearGradient><linearGradient id="g57" gradientUnits="userSpaceOnUse" x1="947.0" y1="523.4" x2="933.0" y2="583.7"><stop offset="0.000" stop-color="#00ccb0"/><stop offset="0.005" stop-color="#00ccb0"/><stop offset="0.005" stop-color="#00cde8"/><stop offset="0.175" stop-color="#00cde8"/><stop offset="0.175" stop-color="#0a96eb"/><stop offset="0.325" stop-color="#0a96eb"/><stop offset="0.325" stop-color="#0e18e6"/><stop offset="0.680" stop-color="#0e18e6"/><stop offset="0.680" stop-color="#0a96eb"/><stop offset="0.830" stop-color="#0a96eb"/><stop offset="0.830" stop-color="#00cde8"/><stop offset="1.000" stop-color="#00cde8"/><stop offset="1.000" stop-color="#00ccb0"/><stop offset="1.000" stop-color="#00ccb0"/></linearGradient><linearGradient id="g58" gradientUnits="userSpaceOnUse" x1="954.9" y1="525.2" x2="940.8" y2="585.6"><stop offset="0.000" stop-color="#00cde8"/><stop offset="0.170" stop-color="#00cde8"/><stop offset="0.170" stop-color="#0a96eb"/><stop offset="0.325" stop-color="#0a96eb"/><stop offset="0.325" stop-color="#0e18e6"/><stop offset="0.680" stop-color="#0e18e6"/><stop offset="0.680" stop-color="#0a96eb"/><stop offset="0.835" stop-color="#0a96eb"/><stop offset="0.835" stop-color="#00cde8"/><stop offset="1.000" stop-color="#00cde8"/></linearGradient><linearGradient id="g59" gradientUnits="userSpaceOnUse" x1="962.8" y1="527.1" x2="948.7" y2="587.4"><stop offset="0.000" stop-color="#00cde8"/><stop offset="0.160" stop-color="#00cde8"/><stop offset="0.160" stop-color="#0a96eb"/><stop offset="0.320" stop-color="#0a96eb"/><stop offset="0.320" stop-color="#0e18e6"/><stop offset="0.685" stop-color="#0e18e6"/><stop offset="0.685" stop-color="#0a96eb"/><stop offset="0.845" stop-color="#0a96eb"/><stop offset="0.845" stop-color="#00cde8"/><stop offset="1.000" stop-color="#00cde8"/></linearGradient><linearGradient id="g60" gradientUnits="userSpaceOnUse" x1="970.7" y1="528.9" x2="956.6" y2="589.3"><stop offset="0.000" stop-color="#00cde8"/><stop offset="0.155" stop-color="#00cde8"/><stop offset="0.155" stop-color="#0a96eb"/><stop offset="0.315" stop-color="#0a96eb"/><stop offset="0.315" stop-color="#0e18e6"/><stop offset="0.690" stop-color="#0e18e6"/><stop offset="0.690" stop-color="#0a96eb"/><stop offset="0.850" stop-color="#0a96eb"/><stop offset="0.850" stop-color="#00cde8"/><stop offset="1.000" stop-color="#00cde8"/></linearGradient><linearGradient id="g61" gradientUnits="userSpaceOnUse" x1="978.6" y1="530.8" x2="964.5" y2="591.1"><stop offset="0.000" stop-color="#00cde8"/><stop offset="0.145" stop-color="#00cde8"/><stop offset="0.145" stop-color="#0a96eb"/><stop offset="0.310" stop-color="#0a96eb"/><stop offset="0.310" stop-color="#0e18e6"/><stop offset="0.695" stop-color="#0e18e6"/><stop offset="0.695" stop-color="#0a96eb"/><stop offset="0.860" stop-color="#0a96eb"/><stop offset="0.860" stop-color="#00cde8"/><stop offset="1.000" stop-color="#00cde8"/></linearGradient><linearGradient id="g62" gradientUnits="userSpaceOnUse" x1="986.5" y1="532.6" x2="972.4" y2="593.0"><stop offset="0.000" stop-color="#00cde8"/><stop offset="0.140" stop-color="#00cde8"/><stop offset="0.140" stop-color="#0a96eb"/><stop offset="0.305" stop-color="#0a96eb"/><stop offset="0.305" stop-color="#0e18e6"/><stop offset="0.700" stop-color="#0e18e6"/><stop offset="0.700" stop-color="#0a96eb"/><stop offset="0.865" stop-color="#0a96eb"/><stop offset="0.865" stop-color="#00cde8"/><stop offset="1.000" stop-color="#00cde8"/></linearGradient><linearGradient id="g63" gradientUnits="userSpaceOnUse" x1="994.4" y1="534.5" x2="980.2" y2="594.9"><stop offset="0.000" stop-color="#00cde8"/><stop offset="0.130" stop-color="#00cde8"/><stop offset="0.130" stop-color="#0a96eb"/><stop offset="0.300" stop-color="#0a96eb"/><stop offset="0.300" stop-color="#0e18e6"/><stop offset="0.705" stop-color="#0e18e6"/><stop offset="0.705" stop-color="#0a96eb"/><stop offset="0.875" stop-color="#0a96eb"/><stop offset="0.875" stop-color="#00cde8"/><stop offset="1.000" stop-color="#00cde8"/></linearGradient><linearGradient id="g64" gradientUnits="userSpaceOnUse" x1="1002.4" y1="536.4" x2="988.1" y2="596.7"><stop offset="0.000" stop-color="#00cde8"/><stop offset="0.115" stop-color="#00cde8"/><stop offset="0.115" stop-color="#0a96eb"/><stop offset="0.295" stop-color="#0a96eb"/><stop offset="0.295" stop-color="#0e18e6"/><stop offset="0.710" stop-color="#0e18e6"/><stop offset="0.710" stop-color="#0a96eb"/><stop offset="0.890" stop-color="#0a96eb"/><stop offset="0.890" stop-color="#00cde8"/><stop offset="1.000" stop-color="#00cde8"/></linearGradient><linearGradient id="g65" gradientUnits="userSpaceOnUse" x1="1010.3" y1="538.2" x2="996.0" y2="598.6"><stop offset="0.000" stop-color="#00cde8"/><stop offset="0.100" stop-color="#00cde8"/><stop offset="0.100" stop-color="#0a96eb"/><stop offset="0.285" stop-color="#0a96eb"/><stop offset="0.285" stop-color="#0e18e6"/><stop offset="0.720" stop-color="#0e18e6"/><stop offset="0.720" stop-color="#0a96eb"/><stop offset="0.905" stop-color="#0a96eb"/><stop offset="0.905" stop-color="#00cde8"/><stop offset="1.000" stop-color="#00cde8"/></linearGradient><linearGradient id="g66" gradientUnits="userSpaceOnUse" x1="1018.2" y1="540.1" x2="1003.9" y2="600.5"><stop offset="0.000" stop-color="#00cde8"/><stop offset="0.075" stop-color="#00cde8"/><stop offset="0.075" stop-color="#0a96eb"/><stop offset="0.275" stop-color="#0a96eb"/><stop offset="0.275" stop-color="#0e18e6"/><stop offset="0.730" stop-color="#0e18e6"/><stop offset="0.730" stop-color="#0a96eb"/><stop offset="0.930" stop-color="#0a96eb"/><stop offset="0.930" stop-color="#00cde8"/><stop offset="1.000" stop-color="#00cde8"/></linearGradient><linearGradient id="g67" gradientUnits="userSpaceOnUse" x1="1026.1" y1="542.0" x2="1011.7" y2="602.4"><stop offset="0.000" stop-color="#00cde8"/><stop offset="0.045" stop-color="#00cde8"/><stop offset="0.045" stop-color="#0a96eb"/><stop offset="0.265" stop-color="#0a96eb"/><stop offset="0.265" stop-color="#0e18e6"/><stop offset="0.740" stop-color="#0e18e6"/><stop offset="0.740" stop-color="#0a96eb"/><stop offset="0.960" stop-color="#0a96eb"/><stop offset="0.960" stop-color="#00cde8"/><stop offset="1.000" stop-color="#00cde8"/></linearGradient><linearGradient id="g68" gradientUnits="userSpaceOnUse" x1="1034.0" y1="543.9" x2="1019.6" y2="604.3"><stop offset="0.000" stop-color="#00cde8"/><stop offset="0.010" stop-color="#00cde8"/><stop offset="0.010" stop-color="#0a96eb"/><stop offset="0.255" stop-color="#0a96eb"/><stop offset="0.255" stop-color="#0e18e6"/><stop offset="0.750" stop-color="#0e18e6"/><stop offset="0.750" stop-color="#0a96eb"/><stop offset="0.995" stop-color="#0a96eb"/><stop offset="0.995" stop-color="#00cde8"/><stop offset="1.000" stop-color="#00cde8"/></linearGradient><linearGradient id="g69" gradientUnits="userSpaceOnUse" x1="1041.9" y1="545.7" x2="1027.5" y2="606.2"><stop offset="0.000" stop-color="#0a96eb"/><stop offset="0.240" stop-color="#0a96eb"/><stop offset="0.240" stop-color="#0e18e6"/><stop offset="0.765" stop-color="#0e18e6"/><stop offset="0.765" stop-color="#0a96eb"/><stop offset="1.000" stop-color="#0a96eb"/></linearGradient><linearGradient id="g70" gradientUnits="userSpaceOnUse" x1="1049.8" y1="547.6" x2="1035.4" y2="608.1"><stop offset="0.000" stop-color="#0a96eb"/><stop offset="0.230" stop-color="#0a96eb"/><stop offset="0.230" stop-color="#0e18e6"/><stop offset="0.775" stop-color="#0e18e6"/><stop offset="0.775" stop-color="#0a96eb"/><stop offset="1.000" stop-color="#0a96eb"/></linearGradient><linearGradient id="g71" gradientUnits="userSpaceOnUse" x1="1057.7" y1="549.5" x2="1043.3" y2="610.0"><stop offset="0.000" stop-color="#0a96eb"/><stop offset="0.215" stop-color="#0a96eb"/><stop offset="0.215" stop-color="#0e18e6"/><stop offset="0.790" stop-color="#0e18e6"/><stop offset="0.790" stop-color="#0a96eb"/><stop offset="1.000" stop-color="#0a96eb"/></linearGradient><linearGradient id="g72" gradientUnits="userSpaceOnUse" x1="1065.6" y1="551.4" x2="1051.2" y2="611.9"><stop offset="0.000" stop-color="#0a96eb"/><stop offset="0.195" stop-color="#0a96eb"/><stop offset="0.195" stop-color="#0e18e6"/><stop offset="0.810" stop-color="#0e18e6"/><stop offset="0.810" stop-color="#0a96eb"/><stop offset="1.000" stop-color="#0a96eb"/></linearGradient><linearGradient id="g73" gradientUnits="userSpaceOnUse" x1="1073.5" y1="553.3" x2="1059.1" y2="613.8"><stop offset="0.000" stop-color="#0a96eb"/><stop offset="0.175" stop-color="#0a96eb"/><stop offset="0.175" stop-color="#0e18e6"/><stop offset="0.830" stop-color="#0e18e6"/><stop offset="0.830" stop-color="#0a96eb"/><stop offset="1.000" stop-color="#0a96eb"/></linearGradient><linearGradient id="g74" gradientUnits="userSpaceOnUse" x1="1081.4" y1="555.2" x2="1066.9" y2="615.7"><stop offset="0.000" stop-color="#0a96eb"/><stop offset="0.160" stop-color="#0a96eb"/><stop offset="0.160" stop-color="#0e18e6"/><stop offset="0.845" stop-color="#0e18e6"/><stop offset="0.845" stop-color="#0a96eb"/><stop offset="1.000" stop-color="#0a96eb"/></linearGradient><linearGradient id="g75" gradientUnits="userSpaceOnUse" x1="1089.3" y1="557.1" x2="1074.8" y2="617.6"><stop offset="0.000" stop-color="#0a96eb"/><stop offset="0.135" stop-color="#0a96eb"/><stop offset="0.135" stop-color="#0e18e6"/><stop offset="0.870" stop-color="#0e18e6"/><stop offset="0.870" stop-color="#0a96eb"/><stop offset="1.000" stop-color="#0a96eb"/></linearGradient><linearGradient id="g76" gradientUnits="userSpaceOnUse" x1="1097.2" y1="559.0" x2="1082.7" y2="619.5"><stop offset="0.000" stop-color="#0a96eb"/><stop offset="0.110" stop-color="#0a96eb"/><stop offset="0.110" stop-color="#0e18e6"/><stop offset="0.895" stop-color="#0e18e6"/><stop offset="0.895" stop-color="#0a96eb"/><stop offset="1.000" stop-color="#0a96eb"/></linearGradient><linearGradient id="g77" gradientUnits="userSpaceOnUse" x1="1105.2" y1="560.9" x2="1090.6" y2="621.4"><stop offset="0.000" stop-color="#0a96eb"/><stop offset="0.085" stop-color="#0a96eb"/><stop offset="0.085" stop-color="#0e18e6"/><stop offset="0.920" stop-color="#0e18e6"/><stop offset="0.920" stop-color="#0a96eb"/><stop offset="1.000" stop-color="#0a96eb"/></linearGradient><linearGradient id="g78" gradientUnits="userSpaceOnUse" x1="1113.1" y1="562.8" x2="1098.5" y2="623.3"><stop offset="0.000" stop-color="#0a96eb"/><stop offset="0.050" stop-color="#0a96eb"/><stop offset="0.050" stop-color="#0e18e6"/><stop offset="0.955" stop-color="#0e18e6"/><stop offset="0.955" stop-color="#0a96eb"/><stop offset="1.000" stop-color="#0a96eb"/></linearGradient><linearGradient id="g79" gradientUnits="userSpaceOnUse" x1="1121.0" y1="564.7" x2="1106.4" y2="625.2"><stop offset="0.000" stop-color="#0a96eb"/><stop offset="0.010" stop-color="#0a96eb"/><stop offset="0.010" stop-color="#0e18e6"/><stop offset="0.995" stop-color="#0e18e6"/><stop offset="0.995" stop-color="#0a96eb"/><stop offset="1.000" stop-color="#0a96eb"/></linearGradient><linearGradient id="g80" gradientUnits="userSpaceOnUse" x1="1128.9" y1="566.6" x2="1114.3" y2="627.2"><stop offset="0.000" stop-color="#0e18e6"/><stop offset="1.000" stop-color="#0e18e6"/></linearGradient><linearGradient id="g81" gradientUnits="userSpaceOnUse" x1="1136.8" y1="568.5" x2="1122.2" y2="629.1"><stop offset="0.000" stop-color="#0e18e6"/><stop offset="1.000" stop-color="#0e18e6"/></linearGradient><linearGradient id="g82" gradientUnits="userSpaceOnUse" x1="1144.7" y1="570.4" x2="1130.1" y2="631.0"><stop offset="0.000" stop-color="#0e18e6"/><stop offset="1.000" stop-color="#0e18e6"/></linearGradient><linearGradient id="g83" gradientUnits="userSpaceOnUse" x1="1152.6" y1="572.3" x2="1138.0" y2="632.9"><stop offset="0.000" stop-color="#0e18e6"/><stop offset="1.000" stop-color="#0e18e6"/></linearGradient><linearGradient id="g84" gradientUnits="userSpaceOnUse" x1="1160.5" y1="574.2" x2="1145.9" y2="634.8"><stop offset="0.000" stop-color="#0e18e6"/><stop offset="1.000" stop-color="#0e18e6"/></linearGradient><linearGradient id="g85" gradientUnits="userSpaceOnUse" x1="1168.4" y1="576.1" x2="1153.8" y2="636.8"><stop offset="0.000" stop-color="#0e18e6"/><stop offset="1.000" stop-color="#0e18e6"/></linearGradient><linearGradient id="g86" gradientUnits="userSpaceOnUse" x1="1176.3" y1="578.0" x2="1161.7" y2="638.7"><stop offset="0.000" stop-color="#0e18e6"/><stop offset="1.000" stop-color="#0e18e6"/></linearGradient><linearGradient id="g87" gradientUnits="userSpaceOnUse" x1="1184.2" y1="579.9" x2="1169.6" y2="640.6"><stop offset="0.000" stop-color="#0e18e6"/><stop offset="1.000" stop-color="#0e18e6"/></linearGradient><linearGradient id="g88" gradientUnits="userSpaceOnUse" x1="1192.1" y1="581.8" x2="1177.5" y2="642.6"><stop offset="0.000" stop-color="#0e18e6"/><stop offset="1.000" stop-color="#0e18e6"/></linearGradient><linearGradient id="g89" gradientUnits="userSpaceOnUse" x1="1200.0" y1="583.7" x2="1185.4" y2="644.5"><stop offset="0.000" stop-color="#0e18e6"/><stop offset="1.000" stop-color="#0e18e6"/></linearGradient></defs>
<polyline points="514.0,392.0 525.9,394.1 537.7,396.2 549.6,398.3 561.5,400.4 573.3,402.5 585.2,404.6 597.1,406.7 608.9,408.8 620.8,410.9 632.7,413.0 644.5,415.1 656.4,417.2 668.3,419.3 680.1,421.4 692.0,423.5 703.9,425.6 715.7,427.7 727.6,429.8 739.5,431.9 751.3,434.0 763.2,436.1 775.1,438.2 786.9,440.3 798.8,442.4 810.7,444.5 822.5,446.6 834.4,448.7 846.3,450.8 858.1,452.9 870.0,455.0 881.9,457.1 893.7,459.2 905.6,461.3 917.5,463.4 929.3,465.5 941.2,467.6 953.1,469.7 964.9,471.8 976.8,473.9 988.7,476.0 1000.5,478.1 1012.4,480.2 1024.3,482.3 1036.1,484.4 1048.0,486.5 1059.9,488.6 1071.7,490.7 1083.6,492.8 1095.5,494.9 1107.3,497.0 1119.2,499.1 1131.1,501.2 1142.9,503.3 1154.8,505.4 1166.7,507.5 1178.5,509.6 1190.4,511.7 1202.3,513.8 1214.1,515.9 1226.0,518.0" stroke="#e4e4e4" stroke-width="1.7" stroke-dasharray="4,2.5" fill="none"/>
<polygon points="1204.0,551.7 1226.0,518.0 1222.0,582.0 1200.0,616.0" stroke="#e4e4e4" stroke-width="1.7" stroke-dasharray="4,2.5" fill="none"/>
<g filter="url(#bl)">
<polygon points="492.3,429.3 516.0,433.4 526.9,414.8 503.1,410.6" fill="#cc1c14" stroke="#cc1c14" stroke-width="0.6"/>
<polygon points="516.0,433.4 539.7,437.7 550.6,419.1 526.9,414.8" fill="#cc1c14" stroke="#cc1c14" stroke-width="0.6"/>
<polygon points="539.7,437.7 563.5,442.0 574.3,423.5 550.6,419.1" fill="#cc1c14" stroke="#cc1c14" stroke-width="0.6"/>
<polygon points="563.5,442.0 587.2,446.5 598.1,428.1 574.3,423.5" fill="#cc1c14" stroke="#cc1c14" stroke-width="0.6"/>
<polygon points="587.2,446.5 610.9,451.0 621.8,432.6 598.1,428.1" fill="#c27810" stroke="#c27810" stroke-width="0.6"/>
<polygon points="610.9,451.0 634.6,455.6 645.5,437.3 621.8,432.6" fill="#c27810" stroke="#c27810" stroke-width="0.6"/>
<polygon points="634.6,455.6 658.4,460.3 669.2,442.1 645.5,437.3" fill="#c27810" stroke="#c27810" stroke-width="0.6"/>
<polygon points="658.4,460.3 682.1,465.1 693.0,447.0 669.2,442.1" fill="#b0a40c" stroke="#b0a40c" stroke-width="0.6"/>
<polygon points="682.1,465.1 705.8,470.0 716.7,451.9 693.0,447.0" fill="#b0a40c" stroke="#b0a40c" stroke-width="0.6"/>
<polygon points="705.8,470.0 729.5,475.0 740.4,456.9 716.7,451.9" fill="#b0a40c" stroke="#b0a40c" stroke-width="0.6"/>
<polygon points="729.5,475.0 753.3,480.0 764.2,462.0 740.4,456.9" fill="#b0a40c" stroke="#b0a40c" stroke-width="0.6"/>
<polygon points="753.3,480.0 777.0,485.1 787.9,467.2 764.2,462.0" fill="#b0a40c" stroke="#b0a40c" stroke-width="0.6"/>
<polygon points="777.0,485.1 800.7,490.3 811.6,472.4 787.9,467.2" fill="#b0a40c" stroke="#b0a40c" stroke-width="0.6"/>
<polygon points="800.7,490.3 824.4,495.5 835.3,477.7 811.6,472.4" fill="#b0a40c" stroke="#b0a40c" stroke-width="0.6"/>
<polygon points="824.4,495.5 848.2,500.8 859.1,483.1 835.3,477.7" fill="#16a016" stroke="#16a016" stroke-width="0.6"/>
<polygon points="848.2,500.8 871.9,506.2 882.8,488.5 859.1,483.1" fill="#16a016" stroke="#16a016" stroke-width="0.6"/>
<polygon points="871.9,506.2 895.6,511.6 906.5,493.9 882.8,488.5" fill="#16a016" stroke="#16a016" stroke-width="0.6"/>
<polygon points="895.6,511.6 919.3,517.0 930.3,499.4 906.5,493.9" fill="#12a094" stroke="#12a094" stroke-width="0.6"/>
<polygon points="919.3,517.0 943.0,522.5 954.0,505.0 930.3,499.4" fill="#12a094" stroke="#12a094" stroke-width="0.6"/>
<polygon points="943.0,522.5 966.8,528.0 977.7,510.6 954.0,505.0" fill="#12a094" stroke="#12a094" stroke-width="0.6"/>
<polygon points="966.8,528.0 990.5,533.6 1001.4,516.2 977.7,510.6" fill="#12a094" stroke="#12a094" stroke-width="0.6"/>
<polygon points="990.5,533.6 1014.2,539.2 1025.2,521.8 1001.4,516.2" fill="#12a094" stroke="#12a094" stroke-width="0.6"/>
<polygon points="1014.2,539.2 1037.9,544.8 1048.9,527.5 1025.2,521.8" fill="#1690b8" stroke="#1690b8" stroke-width="0.6"/>
<polygon points="1037.9,544.8 1061.7,550.5 1072.6,533.2 1048.9,527.5" fill="#1690b8" stroke="#1690b8" stroke-width="0.6"/>
<polygon points="1061.7,550.5 1085.4,556.1 1096.4,539.0 1072.6,533.2" fill="#1690b8" stroke="#1690b8" stroke-width="0.6"/>
<polygon points="1085.4,556.1 1109.1,561.8 1120.1,544.7 1096.4,539.0" fill="#1690b8" stroke="#1690b8" stroke-width="0.6"/>
<polygon points="1109.1,561.8 1132.8,567.5 1143.8,550.5 1120.1,544.7" fill="#1478bc" stroke="#1478bc" stroke-width="0.6"/>
<polygon points="1132.8,567.5 1156.6,573.2 1167.5,556.3 1143.8,550.5" fill="#1420cc" stroke="#1420cc" stroke-width="0.6"/>
<polygon points="1156.6,573.2 1180.3,579.0 1191.3,562.1 1167.5,556.3" fill="#1420cc" stroke="#1420cc" stroke-width="0.6"/>
<polygon points="1180.3,579.0 1204.0,584.7 1215.0,567.9 1191.3,562.1" fill="#1420cc" stroke="#1420cc" stroke-width="0.6"/>
<polygon points="503.1,410.6 526.9,414.8 537.7,396.3 514.0,392.0" fill="#cc1c14" stroke="#cc1c14" stroke-width="0.6"/>
<polygon points="526.9,414.8 550.6,419.1 561.5,400.6 537.7,396.3" fill="#cc1c14" stroke="#cc1c14" stroke-width="0.6"/>
<polygon points="550.6,419.1 574.3,423.5 585.2,405.1 561.5,400.6" fill="#cc1c14" stroke="#cc1c14" stroke-width="0.6"/>
<polygon points="574.3,423.5 598.1,428.1 608.9,409.6 585.2,405.1" fill="#cc1c14" stroke="#cc1c14" stroke-width="0.6"/>
<polygon points="598.1,428.1 621.8,432.6 632.7,414.3 608.9,409.6" fill="#c27810" stroke="#c27810" stroke-width="0.6"/>
<polygon points="621.8,432.6 645.5,437.3 656.4,419.0 632.7,414.3" fill="#c27810" stroke="#c27810" stroke-width="0.6"/>
<polygon points="645.5,437.3 669.2,442.1 680.1,423.9 656.4,419.0" fill="#c27810" stroke="#c27810" stroke-width="0.6"/>
<polygon points="669.2,442.1 693.0,447.0 703.9,428.8 680.1,423.9" fill="#b0a40c" stroke="#b0a40c" stroke-width="0.6"/>
<polygon points="693.0,447.0 716.7,451.9 727.6,433.8 703.9,428.8" fill="#b0a40c" stroke="#b0a40c" stroke-width="0.6"/>
<polygon points="716.7,451.9 740.4,456.9 751.3,438.9 727.6,433.8" fill="#b0a40c" stroke="#b0a40c" stroke-width="0.6"/>
<polygon points="740.4,456.9 764.2,462.0 775.1,444.0 751.3,438.9" fill="#b0a40c" stroke="#b0a40c" stroke-width="0.6"/>
<polygon points="764.2,462.0 787.9,467.2 798.8,449.3 775.1,444.0" fill="#b0a40c" stroke="#b0a40c" stroke-width="0.6"/>
<polygon points="787.9,467.2 811.6,472.4 822.5,454.6 798.8,449.3" fill="#b0a40c" stroke="#b0a40c" stroke-width="0.6"/>
<polygon points="811.6,472.4 835.3,477.7 846.3,459.9 822.5,454.6" fill="#b0a40c" stroke="#b0a40c" stroke-width="0.6"/>
<polygon points="835.3,477.7 859.1,483.1 870.0,465.3 846.3,459.9" fill="#16a016" stroke="#16a016" stroke-width="0.6"/>
<polygon points="859.1,483.1 882.8,488.5 893.7,470.8 870.0,465.3" fill="#16a016" stroke="#16a016" stroke-width="0.6"/>
<polygon points="882.8,488.5 906.5,493.9 917.5,476.3 893.7,470.8" fill="#16a016" stroke="#16a016" stroke-width="0.6"/>
<polygon points="906.5,493.9 930.3,499.4 941.2,481.9 917.5,476.3" fill="#12a094" stroke="#12a094" stroke-width="0.6"/>
<polygon points="930.3,499.4 954.0,505.0 964.9,487.5 941.2,481.9" fill="#12a094" stroke="#12a094" stroke-width="0.6"/>
<polygon points="954.0,505.0 977.7,510.6 988.7,493.1 964.9,487.5" fill="#12a094" stroke="#12a094" stroke-width="0.6"/>
<polygon points="977.7,510.6 1001.4,516.2 1012.4,498.8 988.7,493.1" fill="#12a094" stroke="#12a094" stroke-width="0.6"/>
<polygon points="1001.4,516.2 1025.2,521.8 1036.1,504.5 1012.4,498.8" fill="#1690b8" stroke="#1690b8" stroke-width="0.6"/>
<polygon points="1025.2,521.8 1048.9,527.5 1059.9,510.3 1036.1,504.5" fill="#1690b8" stroke="#1690b8" stroke-width="0.6"/>
<polygon points="1048.9,527.5 1072.6,533.2 1083.6,516.0 1059.9,510.3" fill="#1690b8" stroke="#1690b8" stroke-width="0.6"/>
<polygon points="1072.6,533.2 1096.4,539.0 1107.3,521.8 1083.6,516.0" fill="#1690b8" stroke="#1690b8" stroke-width="0.6"/>
<polygon points="1096.4,539.0 1120.1,544.7 1131.1,527.6 1107.3,521.8" fill="#1478bc" stroke="#1478bc" stroke-width="0.6"/>
<polygon points="1120.1,544.7 1143.8,550.5 1154.8,533.5 1131.1,527.6" fill="#1478bc" stroke="#1478bc" stroke-width="0.6"/>
<polygon points="1143.8,550.5 1167.5,556.3 1178.5,539.3 1154.8,533.5" fill="#1420cc" stroke="#1420cc" stroke-width="0.6"/>
<polygon points="1167.5,556.3 1191.3,562.1 1202.3,545.2 1178.5,539.3" fill="#1420cc" stroke="#1420cc" stroke-width="0.6"/>
<polygon points="1191.3,562.1 1215.0,567.9 1226.0,551.0 1202.3,545.2" fill="#1420cc" stroke="#1420cc" stroke-width="0.6"/>
<polygon points="492.3,429.3 500.2,430.7 500.2,493.0 492.3,491.6" fill="url(#g0)" stroke="url(#g0)" stroke-width="0.6"/>
<polygon points="500.2,430.7 508.1,432.0 508.0,494.4 500.2,493.0" fill="url(#g1)" stroke="url(#g1)" stroke-width="0.6"/>
<polygon points="508.1,432.0 516.0,433.4 515.9,495.8 508.0,494.4" fill="url(#g2)" stroke="url(#g2)" stroke-width="0.6"/>
<polygon points="516.0,433.4 523.9,434.8 523.8,497.2 515.9,495.8" fill="url(#g3)" stroke="url(#g3)" stroke-width="0.6"/>
<polygon points="523.9,434.8 531.8,436.2 531.6,498.7 523.8,497.2" fill="url(#g4)" stroke="url(#g4)" stroke-width="0.6"/>
<polygon points="531.8,436.2 539.7,437.7 539.5,500.1 531.6,498.7" fill="url(#g5)" stroke="url(#g5)" stroke-width="0.6"/>
<polygon points="539.7,437.7 547.7,439.1 547.3,501.6 539.5,500.1" fill="url(#g6)" stroke="url(#g6)" stroke-width="0.6"/>
<polygon points="547.7,439.1 555.6,440.6 555.2,503.0 547.3,501.6" fill="url(#g7)" stroke="url(#g7)" stroke-width="0.6"/>
<polygon points="555.6,440.6 563.5,442.0 563.1,504.5 555.2,503.0" fill="url(#g8)" stroke="url(#g8)" stroke-width="0.6"/>
<polygon points="563.5,442.0 571.4,443.5 570.9,506.0 563.1,504.5" fill="url(#g9)" stroke="url(#g9)" stroke-width="0.6"/>
<polygon points="571.4,443.5 579.3,445.0 578.8,507.5 570.9,506.0" fill="url(#g10)" stroke="url(#g10)" stroke-width="0.6"/>
<polygon points="579.3,445.0 587.2,446.5 586.7,509.0 578.8,507.5" fill="url(#g11)" stroke="url(#g11)" stroke-width="0.6"/>
<polygon points="587.2,446.5 595.1,448.0 594.5,510.6 586.7,509.0" fill="url(#g12)" stroke="url(#g12)" stroke-width="0.6"/>
<polygon points="595.1,448.0 603.0,449.5 602.4,512.1 594.5,510.6" fill="url(#g13)" stroke="url(#g13)" stroke-width="0.6"/>
<polygon points="603.0,449.5 610.9,451.0 610.2,513.6 602.4,512.1" fill="url(#g14)" stroke="url(#g14)" stroke-width="0.6"/>
<polygon points="610.9,451.0 618.8,452.5 618.1,515.2 610.2,513.6" fill="url(#g15)" stroke="url(#g15)" stroke-width="0.6"/>
<polygon points="618.8,452.5 626.7,454.1 626.0,516.8 618.1,515.2" fill="url(#g16)" stroke="url(#g16)" stroke-width="0.6"/>
<polygon points="626.7,454.1 634.6,455.6 633.8,518.3 626.0,516.8" fill="url(#g17)" stroke="url(#g17)" stroke-width="0.6"/>
<polygon points="634.6,455.6 642.5,457.2 641.7,519.9 633.8,518.3" fill="url(#g18)" stroke="url(#g18)" stroke-width="0.6"/>
<polygon points="642.5,457.2 650.5,458.8 649.6,521.5 641.7,519.9" fill="url(#g19)" stroke="url(#g19)" stroke-width="0.6"/>
<polygon points="650.5,458.8 658.4,460.3 657.4,523.1 649.6,521.5" fill="url(#g20)" stroke="url(#g20)" stroke-width="0.6"/>
<polygon points="658.4,460.3 666.3,461.9 665.3,524.7 657.4,523.1" fill="url(#g21)" stroke="url(#g21)" stroke-width="0.6"/>
<polygon points="666.3,461.9 674.2,463.5 673.2,526.3 665.3,524.7" fill="url(#g22)" stroke="url(#g22)" stroke-width="0.6"/>
<polygon points="674.2,463.5 682.1,465.1 681.0,528.0 673.2,526.3" fill="url(#g23)" stroke="url(#g23)" stroke-width="0.6"/>
<polygon points="682.1,465.1 690.0,466.8 688.9,529.6 681.0,528.0" fill="url(#g24)" stroke="url(#g24)" stroke-width="0.6"/>
<polygon points="690.0,466.8 697.9,468.4 696.7,531.3 688.9,529.6" fill="url(#g25)" stroke="url(#g25)" stroke-width="0.6"/>
<polygon points="697.9,468.4 705.8,470.0 704.6,532.9 696.7,531.3" fill="url(#g26)" stroke="url(#g26)" stroke-width="0.6"/>
<polygon points="705.8,470.0 713.7,471.7 712.5,534.6 704.6,532.9" fill="url(#g27)" stroke="url(#g27)" stroke-width="0.6"/>
<polygon points="713.7,471.7 721.6,473.3 720.3,536.3 712.5,534.6" fill="url(#g28)" stroke="url(#g28)" stroke-width="0.6"/>
<polygon points="721.6,473.3 729.5,475.0 728.2,538.0 720.3,536.3" fill="url(#g29)" stroke="url(#g29)" stroke-width="0.6"/>
<polygon points="729.5,475.0 737.4,476.7 736.1,539.6 728.2,538.0" fill="url(#g30)" stroke="url(#g30)" stroke-width="0.6"/>
<polygon points="737.4,476.7 745.3,478.3 743.9,541.3 736.1,539.6" fill="url(#g31)" stroke="url(#g31)" stroke-width="0.6"/>
<polygon points="745.3,478.3 753.3,480.0 751.8,543.1 743.9,541.3" fill="url(#g32)" stroke="url(#g32)" stroke-width="0.6"/>
<polygon points="753.3,480.0 761.2,481.7 759.7,544.8 751.8,543.1" fill="url(#g33)" stroke="url(#g33)" stroke-width="0.6"/>
<polygon points="761.2,481.7 769.1,483.4 767.5,546.5 759.7,544.8" fill="url(#g34)" stroke="url(#g34)" stroke-width="0.6"/>
<polygon points="769.1,483.4 777.0,485.1 775.4,548.2 767.5,546.5" fill="url(#g35)" stroke="url(#g35)" stroke-width="0.6"/>
<polygon points="777.0,485.1 784.9,486.8 783.2,550.0 775.4,548.2" fill="url(#g36)" stroke="url(#g36)" stroke-width="0.6"/>
<polygon points="784.9,486.8 792.8,488.6 791.1,551.7 783.2,550.0" fill="url(#g37)" stroke="url(#g37)" stroke-width="0.6"/>
<polygon points="792.8,488.6 800.7,490.3 799.0,553.5 791.1,551.7" fill="url(#g38)" stroke="url(#g38)" stroke-width="0.6"/>
<polygon points="800.7,490.3 808.6,492.0 806.8,555.2 799.0,553.5" fill="url(#g39)" stroke="url(#g39)" stroke-width="0.6"/>
<polygon points="808.6,492.0 816.5,493.8 814.7,557.0 806.8,555.2" fill="url(#g40)" stroke="url(#g40)" stroke-width="0.6"/>
<polygon points="816.5,493.8 824.4,495.5 822.6,558.8 814.7,557.0" fill="url(#g41)" stroke="url(#g41)" stroke-width="0.6"/>
<polygon points="824.4,495.5 832.3,497.3 830.4,560.5 822.6,558.8" fill="url(#g42)" stroke="url(#g42)" stroke-width="0.6"/>
<polygon points="832.3,497.3 840.2,499.0 838.3,562.3 830.4,560.5" fill="url(#g43)" stroke="url(#g43)" stroke-width="0.6"/>
<polygon points="840.2,499.0 848.2,500.8 846.2,564.1 838.3,562.3" fill="url(#g44)" stroke="url(#g44)" stroke-width="0.6"/>
<polygon points="848.2,500.8 856.1,502.6 854.0,565.9 846.2,564.1" fill="url(#g45)" stroke="url(#g45)" stroke-width="0.6"/>
<polygon points="856.1,502.6 864.0,504.4 861.9,567.7 854.0,565.9" fill="url(#g46)" stroke="url(#g46)" stroke-width="0.6"/>
<polygon points="864.0,504.4 871.9,506.2 869.7,569.5 861.9,567.7" fill="url(#g47)" stroke="url(#g47)" stroke-width="0.6"/>
<polygon points="871.9,506.2 879.8,507.9 877.6,571.3 869.7,569.5" fill="url(#g48)" stroke="url(#g48)" stroke-width="0.6"/>
<polygon points="879.8,507.9 887.7,509.7 885.5,573.2 877.6,571.3" fill="url(#g49)" stroke="url(#g49)" stroke-width="0.6"/>
<polygon points="887.7,509.7 895.6,511.6 893.3,575.0 885.5,573.2" fill="url(#g50)" stroke="url(#g50)" stroke-width="0.6"/>
<polygon points="895.6,511.6 903.5,513.4 901.2,576.8 893.3,575.0" fill="url(#g51)" stroke="url(#g51)" stroke-width="0.6"/>
<polygon points="903.5,513.4 911.4,515.2 909.1,578.7 901.2,576.8" fill="url(#g52)" stroke="url(#g52)" stroke-width="0.6"/>
<polygon points="911.4,515.2 919.3,517.0 916.9,580.5 909.1,578.7" fill="url(#g53)" stroke="url(#g53)" stroke-width="0.6"/>
<polygon points="919.3,517.0 927.2,518.8 924.8,582.3 916.9,580.5" fill="url(#g54)" stroke="url(#g54)" stroke-width="0.6"/>
<polygon points="927.2,518.8 935.1,520.6 932.6,584.2 924.8,582.3" fill="url(#g55)" stroke="url(#g55)" stroke-width="0.6"/>
<polygon points="935.1,520.6 943.0,522.5 940.5,586.1 932.6,584.2" fill="url(#g56)" stroke="url(#g56)" stroke-width="0.6"/>
<polygon points="943.0,522.5 951.0,524.3 948.4,587.9 940.5,586.1" fill="url(#g57)" stroke="url(#g57)" stroke-width="0.6"/>
<polygon points="951.0,524.3 958.9,526.2 956.2,589.8 948.4,587.9" fill="url(#g58)" stroke="url(#g58)" stroke-width="0.6"/>
<polygon points="958.9,526.2 966.8,528.0 964.1,591.6 956.2,589.8" fill="url(#g59)" stroke="url(#g59)" stroke-width="0.6"/>
<polygon points="966.8,528.0 974.7,529.9 972.0,593.5 964.1,591.6" fill="url(#g60)" stroke="url(#g60)" stroke-width="0.6"/>
<polygon points="974.7,529.9 982.6,531.7 979.8,595.4 972.0,593.5" fill="url(#g61)" stroke="url(#g61)" stroke-width="0.6"/>
<polygon points="982.6,531.7 990.5,533.6 987.7,597.3 979.8,595.4" fill="url(#g62)" stroke="url(#g62)" stroke-width="0.6"/>
<polygon points="990.5,533.6 998.4,535.4 995.6,599.2 987.7,597.3" fill="url(#g63)" stroke="url(#g63)" stroke-width="0.6"/>
<polygon points="998.4,535.4 1006.3,537.3 1003.4,601.0 995.6,599.2" fill="url(#g64)" stroke="url(#g64)" stroke-width="0.6"/>
<polygon points="1006.3,537.3 1014.2,539.2 1011.3,602.9 1003.4,601.0" fill="url(#g65)" stroke="url(#g65)" stroke-width="0.6"/>
<polygon points="1014.2,539.2 1022.1,541.0 1019.1,604.8 1011.3,602.9" fill="url(#g66)" stroke="url(#g66)" stroke-width="0.6"/>
<polygon points="1022.1,541.0 1030.0,542.9 1027.0,606.7 1019.1,604.8" fill="url(#g67)" stroke="url(#g67)" stroke-width="0.6"/>
<polygon points="1030.0,542.9 1037.9,544.8 1034.9,608.6 1027.0,606.7" fill="url(#g68)" stroke="url(#g68)" stroke-width="0.6"/>
<polygon points="1037.9,544.8 1045.8,546.7 1042.7,610.5 1034.9,608.6" fill="url(#g69)" stroke="url(#g69)" stroke-width="0.6"/>
<polygon points="1045.8,546.7 1053.8,548.6 1050.6,612.4 1042.7,610.5" fill="url(#g70)" stroke="url(#g70)" stroke-width="0.6"/>
<polygon points="1053.8,548.6 1061.7,550.5 1058.5,614.4 1050.6,612.4" fill="url(#g71)" stroke="url(#g71)" stroke-width="0.6"/>
<polygon points="1061.7,550.5 1069.6,552.3 1066.3,616.3 1058.5,614.4" fill="url(#g72)" stroke="url(#g72)" stroke-width="0.6"/>
<polygon points="1069.6,552.3 1077.5,554.2 1074.2,618.2 1066.3,616.3" fill="url(#g73)" stroke="url(#g73)" stroke-width="0.6"/>
<polygon points="1077.5,554.2 1085.4,556.1 1082.1,620.1 1074.2,618.2" fill="url(#g74)" stroke="url(#g74)" stroke-width="0.6"/>
<polygon points="1085.4,556.1 1093.3,558.0 1089.9,622.0 1082.1,620.1" fill="url(#g75)" stroke="url(#g75)" stroke-width="0.6"/>
<polygon points="1093.3,558.0 1101.2,559.9 1097.8,623.9 1089.9,622.0" fill="url(#g76)" stroke="url(#g76)" stroke-width="0.6"/>
<polygon points="1101.2,559.9 1109.1,561.8 1105.6,625.9 1097.8,623.9" fill="url(#g77)" stroke="url(#g77)" stroke-width="0.6"/>
<polygon points="1109.1,561.8 1117.0,563.7 1113.5,627.8 1105.6,625.9" fill="url(#g78)" stroke="url(#g78)" stroke-width="0.6"/>
<polygon points="1117.0,563.7 1124.9,565.6 1121.4,629.7 1113.5,627.8" fill="url(#g79)" stroke="url(#g79)" stroke-width="0.6"/>
<polygon points="1124.9,565.6 1132.8,567.5 1129.2,631.6 1121.4,629.7" fill="url(#g80)" stroke="url(#g80)" stroke-width="0.6"/>
<polygon points="1132.8,567.5 1140.7,569.4 1137.1,633.6 1129.2,631.6" fill="url(#g81)" stroke="url(#g81)" stroke-width="0.6"/>
<polygon points="1140.7,569.4 1148.6,571.3 1145.0,635.5 1137.1,633.6" fill="url(#g82)" stroke="url(#g82)" stroke-width="0.6"/>
<polygon points="1148.6,571.3 1156.6,573.2 1152.8,637.4 1145.0,635.5" fill="url(#g83)" stroke="url(#g83)" stroke-width="0.6"/>
<polygon points="1156.6,573.2 1164.5,575.2 1160.7,639.3 1152.8,637.4" fill="url(#g84)" stroke="url(#g84)" stroke-width="0.6"/>
<polygon points="1164.5,575.2 1172.4,577.1 1168.5,641.3 1160.7,639.3" fill="url(#g85)" stroke="url(#g85)" stroke-width="0.6"/>
<polygon points="1172.4,577.1 1180.3,579.0 1176.4,643.2 1168.5,641.3" fill="url(#g86)" stroke="url(#g86)" stroke-width="0.6"/>
<polygon points="1180.3,579.0 1188.2,580.9 1184.3,645.1 1176.4,643.2" fill="url(#g87)" stroke="url(#g87)" stroke-width="0.6"/>
<polygon points="1188.2,580.9 1196.1,582.8 1192.1,647.1 1184.3,645.1" fill="url(#g88)" stroke="url(#g88)" stroke-width="0.6"/>
<polygon points="1196.1,582.8 1204.0,584.7 1200.0,649.0 1192.1,647.1" fill="url(#g89)" stroke="url(#g89)" stroke-width="0.6"/>
<polygon points="1204.0,584.7 1226.0,551.0 1222.0,615.0 1200.0,649.0" fill="#1420d0"/>
</g>
<g filter="url(#bl2)">
<polyline points="705.8,466.0 718.3,468.2 730.7,470.3 743.2,472.4 755.6,474.6 768.1,476.7 780.5,478.9 793.0,481.0 805.4,483.2 817.9,485.3 830.4,487.4 842.8,489.6 855.3,491.7 867.7,493.9 880.2,496.0 892.6,498.2 905.1,500.3 917.5,502.4 930.0,504.6 942.5,506.7 954.9,508.9 967.4,511.0 979.8,513.1 992.3,515.3 1004.7,517.4 1017.2,519.6 1029.6,521.7 1042.1,523.9 1054.5,526.0 1067.0,528.1 1079.5,530.3 1091.9,532.4 1104.4,534.6 1116.8,536.7 1129.3,538.8 1141.7,541.0 1154.2,543.1 1166.6,545.3 1179.1,547.4 1191.5,549.6 1204.0,551.7" stroke="#eaeaea" stroke-width="1.6" stroke-dasharray="4,2.5" fill="none" stroke-opacity="0.85"/>
<polyline points="716.7,447.9 729.2,450.1 741.6,452.3 754.1,454.4 766.5,456.6 779.0,458.8 791.4,461.0 803.9,463.1 816.4,465.3 828.8,467.5 841.3,469.6 853.7,471.8 866.2,474.0 878.7,476.2 891.1,478.3 903.6,480.5 916.0,482.7 928.5,484.9 940.9,487.0 953.4,489.2 965.9,491.4 978.3,493.6 990.8,495.7 1003.2,497.9 1015.7,500.1 1028.1,502.2 1040.6,504.4 1053.1,506.6 1065.5,508.8 1078.0,510.9 1090.4,513.1 1102.9,515.3 1115.3,517.5 1127.8,519.6 1140.3,521.8 1152.7,524.0 1165.2,526.2 1177.6,528.3 1190.1,530.5 1202.5,532.7 1215.0,534.9" stroke="#eaeaea" stroke-width="1.6" stroke-dasharray="4,2.5" fill="none" stroke-opacity="0.85"/>
<polyline points="705.2,497.5 717.6,499.6 730.0,501.8 742.5,503.9 754.9,506.1 767.3,508.3 779.7,510.4 792.1,512.6 804.6,514.7 817.0,516.9 829.4,519.1 841.8,521.2 854.2,523.4 866.7,525.5 879.1,527.7 891.5,529.9 903.9,532.0 916.3,534.2 928.8,536.3 941.2,538.5 953.6,540.7 966.0,542.8 978.4,545.0 990.9,547.1 1003.3,549.3 1015.7,551.5 1028.1,553.6 1040.5,555.8 1053.0,557.9 1065.4,560.1 1077.8,562.3 1090.2,564.4 1102.6,566.6 1115.1,568.7 1127.5,570.9 1139.9,573.1 1152.3,575.2 1164.7,577.4 1177.2,579.5 1189.6,581.7 1202.0,583.9" stroke="#eaeaea" stroke-width="1.6" stroke-dasharray="4,2.5" fill="none" stroke-opacity="0.85"/>
<polyline points="704.6,528.9 717.0,531.1 729.4,533.3 741.8,535.5 754.1,537.6 766.5,539.8 778.9,542.0 791.3,544.2 803.7,546.3 816.1,548.5 828.5,550.7 840.8,552.9 853.2,555.0 865.6,557.2 878.0,559.4 890.4,561.6 902.8,563.8 915.2,565.9 927.5,568.1 939.9,570.3 952.3,572.5 964.7,574.6 977.1,576.8 989.5,579.0 1001.8,581.2 1014.2,583.3 1026.6,585.5 1039.0,587.7 1051.4,589.9 1063.8,592.1 1076.2,594.2 1088.5,596.4 1100.9,598.6 1113.3,600.8 1125.7,602.9 1138.1,605.1 1150.5,607.3 1162.8,609.5 1175.2,611.6 1187.6,613.8 1200.0,616.0" stroke="#eaeaea" stroke-width="1.6" stroke-dasharray="4,2.5" fill="none" stroke-opacity="0.85"/>
<line x1="682.1" y1="461.9" x2="703.9" y2="425.6" stroke="#eaeaea" stroke-width="1.6" stroke-dasharray="4,2.5" fill="none" stroke-opacity="0.85"/>
<line x1="705.8" y1="466.0" x2="727.6" y2="429.8" stroke="#eaeaea" stroke-width="1.6" stroke-dasharray="4,2.5" fill="none" stroke-opacity="0.85"/>
<line x1="729.5" y1="470.1" x2="751.3" y2="434.0" stroke="#eaeaea" stroke-width="1.6" stroke-dasharray="4,2.5" fill="none" stroke-opacity="0.85"/>
<line x1="753.3" y1="474.2" x2="775.1" y2="438.2" stroke="#eaeaea" stroke-width="1.6" stroke-dasharray="4,2.5" fill="none" stroke-opacity="0.85"/>
<line x1="777.0" y1="478.3" x2="798.8" y2="442.4" stroke="#eaeaea" stroke-width="1.6" stroke-dasharray="4,2.5" fill="none" stroke-opacity="0.85"/>
<line x1="800.7" y1="482.3" x2="822.5" y2="446.6" stroke="#eaeaea" stroke-width="1.6" stroke-dasharray="4,2.5" fill="none" stroke-opacity="0.85"/>
<line x1="824.4" y1="486.4" x2="846.3" y2="450.8" stroke="#eaeaea" stroke-width="1.6" stroke-dasharray="4,2.5" fill="none" stroke-opacity="0.85"/>
<line x1="848.2" y1="490.5" x2="870.0" y2="455.0" stroke="#eaeaea" stroke-width="1.6" stroke-dasharray="4,2.5" fill="none" stroke-opacity="0.85"/>
<line x1="871.9" y1="494.6" x2="893.7" y2="459.2" stroke="#eaeaea" stroke-width="1.6" stroke-dasharray="4,2.5" fill="none" stroke-opacity="0.85"/>
<line x1="895.6" y1="498.7" x2="917.5" y2="463.4" stroke="#eaeaea" stroke-width="1.6" stroke-dasharray="4,2.5" fill="none" stroke-opacity="0.85"/>
<line x1="919.3" y1="502.7" x2="941.2" y2="467.6" stroke="#eaeaea" stroke-width="1.6" stroke-dasharray="4,2.5" fill="none" stroke-opacity="0.85"/>
<line x1="943.0" y1="506.8" x2="964.9" y2="471.8" stroke="#eaeaea" stroke-width="1.6" stroke-dasharray="4,2.5" fill="none" stroke-opacity="0.85"/>
<line x1="966.8" y1="510.9" x2="988.7" y2="476.0" stroke="#eaeaea" stroke-width="1.6" stroke-dasharray="4,2.5" fill="none" stroke-opacity="0.85"/>
<line x1="990.5" y1="515.0" x2="1012.4" y2="480.2" stroke="#eaeaea" stroke-width="1.6" stroke-dasharray="4,2.5" fill="none" stroke-opacity="0.85"/>
<line x1="1014.2" y1="519.1" x2="1036.1" y2="484.4" stroke="#eaeaea" stroke-width="1.6" stroke-dasharray="4,2.5" fill="none" stroke-opacity="0.85"/>
<line x1="1037.9" y1="523.1" x2="1059.9" y2="488.6" stroke="#eaeaea" stroke-width="1.6" stroke-dasharray="4,2.5" fill="none" stroke-opacity="0.85"/>
<line x1="1061.7" y1="527.2" x2="1083.6" y2="492.8" stroke="#eaeaea" stroke-width="1.6" stroke-dasharray="4,2.5" fill="none" stroke-opacity="0.85"/>
<line x1="1085.4" y1="531.3" x2="1107.3" y2="497.0" stroke="#eaeaea" stroke-width="1.6" stroke-dasharray="4,2.5" fill="none" stroke-opacity="0.85"/>
<line x1="1109.1" y1="535.4" x2="1131.1" y2="501.2" stroke="#eaeaea" stroke-width="1.6" stroke-dasharray="4,2.5" fill="none" stroke-opacity="0.85"/>
<line x1="1132.8" y1="539.5" x2="1154.8" y2="505.4" stroke="#eaeaea" stroke-width="1.6" stroke-dasharray="4,2.5" fill="none" stroke-opacity="0.85"/>
<line x1="1156.6" y1="543.5" x2="1178.5" y2="509.6" stroke="#eaeaea" stroke-width="1.6" stroke-dasharray="4,2.5" fill="none" stroke-opacity="0.85"/>
<line x1="1180.3" y1="547.6" x2="1202.3" y2="513.8" stroke="#eaeaea" stroke-width="1.6" stroke-dasharray="4,2.5" fill="none" stroke-opacity="0.85"/>
<line x1="1204.0" y1="551.7" x2="1226.0" y2="518.0" stroke="#eaeaea" stroke-width="1.6" stroke-dasharray="4,2.5" fill="none" stroke-opacity="0.85"/>
<polyline points="492.3,429.3 504.2,431.4 516.0,433.4 527.9,435.5 539.7,437.7 551.6,439.8 563.5,442.0 575.3,444.2 587.2,446.5 599.1,448.7 610.9,451.0 622.8,453.3 634.6,455.6 646.5,458.0 658.4,460.3 670.2,462.7 682.1,465.1 693.9,467.6 705.8,470.0 717.7,472.5 729.5,475.0 741.4,477.5 753.3,480.0 765.1,482.6 777.0,485.1 788.8,487.7 800.7,490.3 812.6,492.9 824.4,495.5 836.3,498.2 848.2,500.8 860.0,503.5 871.9,506.2 883.7,508.8 895.6,511.6 907.5,514.3 919.3,517.0 931.2,519.7 943.0,522.5 954.9,525.2 966.8,528.0 978.6,530.8 990.5,533.6 1002.4,536.4 1014.2,539.2 1026.1,542.0 1037.9,544.8 1049.8,547.6 1061.7,550.5 1073.5,553.3 1085.4,556.1 1097.2,559.0 1109.1,561.8 1121.0,564.7 1132.8,567.5 1144.7,570.4 1156.6,573.2 1168.4,576.1 1180.3,579.0 1192.1,581.8 1204.0,584.7" stroke="#f6f4ea" stroke-width="2.5" fill="none" stroke-opacity="0.9"/>
<polyline points="492.3,491.6 504.1,493.7 515.9,495.8 527.7,497.9 539.5,500.1 551.3,502.3 563.1,504.5 574.9,506.8 586.7,509.0 598.5,511.3 610.2,513.6 622.0,516.0 633.8,518.3 645.6,520.7 657.4,523.1 669.2,525.5 681.0,528.0 692.8,530.4 704.6,532.9 716.4,535.4 728.2,538.0 740.0,540.5 751.8,543.1 763.6,545.6 775.4,548.2 787.2,550.8 799.0,553.5 810.8,556.1 822.6,558.8 834.4,561.4 846.2,564.1 857.9,566.8 869.7,569.5 881.5,572.2 893.3,575.0 905.1,577.7 916.9,580.5 928.7,583.3 940.5,586.1 952.3,588.8 964.1,591.6 975.9,594.5 987.7,597.3 999.5,600.1 1011.3,602.9 1023.1,605.8 1034.9,608.6 1046.7,611.5 1058.5,614.4 1070.3,617.2 1082.1,620.1 1093.8,623.0 1105.6,625.9 1117.4,628.7 1129.2,631.6 1141.0,634.5 1152.8,637.4 1164.6,640.3 1176.4,643.2 1188.2,646.1 1200.0,649.0" stroke="#f6f4ea" stroke-width="2.5" fill="none" stroke-opacity="0.9"/>
<polyline points="514.0,392.0 525.9,394.1 537.7,396.3 549.6,398.4 561.5,400.6 573.3,402.8 585.2,405.1 597.1,407.3 608.9,409.6 620.8,412.0 632.7,414.3 644.5,416.7 656.4,419.0 668.3,421.5 680.1,423.9 692.0,426.3 703.9,428.8 715.7,431.3 727.6,433.8 739.5,436.3 751.3,438.9 763.2,441.5 775.1,444.0 786.9,446.6 798.8,449.3 810.7,451.9 822.5,454.6 834.4,457.2 846.3,459.9 858.1,462.6 870.0,465.3 881.9,468.0 893.7,470.8 905.6,473.5 917.5,476.3 929.3,479.1 941.2,481.9 953.1,484.7 964.9,487.5 976.8,490.3 988.7,493.1 1000.5,495.9 1012.4,498.8 1024.3,501.7 1036.1,504.5 1048.0,507.4 1059.9,510.3 1071.7,513.1 1083.6,516.0 1095.5,518.9 1107.3,521.8 1119.2,524.7 1131.1,527.6 1142.9,530.6 1154.8,533.5 1166.7,536.4 1178.5,539.3 1190.4,542.2 1202.3,545.2 1214.1,548.1 1226.0,551.0" stroke="#f6f4ea" stroke-width="2.5" fill="none" stroke-opacity="0.9"/>
<polyline points="492.3,460.5 504.1,462.5 516.0,464.6 527.8,466.7 539.6,468.9 551.4,471.1 563.3,473.3 575.1,475.5 586.9,477.7 598.8,480.0 610.6,482.3 622.4,484.6 634.2,487.0 646.1,489.3 657.9,491.7 669.7,494.1 681.6,496.6 693.4,499.0 705.2,501.5 717.0,504.0 728.9,506.5 740.7,509.0 752.5,511.5 764.4,514.1 776.2,516.7 788.0,519.3 799.8,521.9 811.7,524.5 823.5,527.1 835.3,529.8 847.2,532.5 859.0,535.1 870.8,537.8 882.6,540.5 894.5,543.3 906.3,546.0 918.1,548.7 929.9,551.5 941.8,554.3 953.6,557.0 965.4,559.8 977.3,562.6 989.1,565.4 1000.9,568.2 1012.7,571.1 1024.6,573.9 1036.4,576.7 1048.2,579.6 1060.1,582.4 1071.9,585.3 1083.7,588.1 1095.5,591.0 1107.4,593.8 1119.2,596.7 1131.0,599.6 1142.9,602.5 1154.7,605.3 1166.5,608.2 1178.3,611.1 1190.2,614.0 1202.0,616.9" stroke="#f6f4ea" stroke-width="2.5" fill="none" stroke-opacity="0.9"/>
<polyline points="503.1,410.6 515.0,412.7 526.9,414.8 538.7,417.0 550.6,419.1 562.5,421.3 574.3,423.5 586.2,425.8 598.1,428.1 609.9,430.3 621.8,432.6 633.7,435.0 645.5,437.3 657.4,439.7 669.2,442.1 681.1,444.5 693.0,447.0 704.8,449.4 716.7,451.9 728.6,454.4 740.4,456.9 752.3,459.5 764.2,462.0 776.0,464.6 787.9,467.2 799.8,469.8 811.6,472.4 823.5,475.1 835.3,477.7 847.2,480.4 859.1,483.1 870.9,485.8 882.8,488.5 894.7,491.2 906.5,493.9 918.4,496.7 930.3,499.4 942.1,502.2 954.0,505.0 965.9,507.8 977.7,510.6 989.6,513.4 1001.4,516.2 1013.3,519.0 1025.2,521.8 1037.0,524.7 1048.9,527.5 1060.8,530.4 1072.6,533.2 1084.5,536.1 1096.4,539.0 1108.2,541.9 1120.1,544.7 1132.0,547.6 1143.8,550.5 1155.7,553.4 1167.5,556.3 1179.4,559.2 1191.3,562.1 1203.1,565.0 1215.0,567.9" stroke="#f6f4ea" stroke-width="2.5" fill="none" stroke-opacity="0.9"/>
<polyline points="514.0,392.0 492.3,429.3 492.3,491.6" stroke="#f6f4ea" stroke-width="2.5" fill="none" stroke-opacity="0.9"/>
<polyline points="537.7,396.3 516.0,433.4 515.9,495.8" stroke="#f6f4ea" stroke-width="2.5" fill="none" stroke-opacity="0.9"/>
<polyline points="561.5,400.6 539.7,437.7 539.5,500.1" stroke="#f6f4ea" stroke-width="2.5" fill="none" stroke-opacity="0.9"/>
<polyline points="585.2,405.1 563.5,442.0 563.1,504.5" stroke="#f6f4ea" stroke-width="2.5" fill="none" stroke-opacity="0.9"/>
<polyline points="608.9,409.6 587.2,446.5 586.7,509.0" stroke="#f6f4ea" stroke-width="2.5" fill="none" stroke-opacity="0.9"/>
<polyline points="632.7,414.3 610.9,451.0 610.2,513.6" stroke="#f6f4ea" stroke-width="2.5" fill="none" stroke-opacity="0.9"/>
<polyline points="656.4,419.0 634.6,455.6 633.8,518.3" stroke="#f6f4ea" stroke-width="2.5" fill="none" stroke-opacity="0.9"/>
<polyline points="680.1,423.9 658.4,460.3 657.4,523.1" stroke="#f6f4ea" stroke-width="2.5" fill="none" stroke-opacity="0.9"/>
<polyline points="703.9,428.8 682.1,465.1 681.0,528.0" stroke="#f6f4ea" stroke-width="2.5" fill="none" stroke-opacity="0.9"/>
<polyline points="727.6,433.8 705.8,470.0 704.6,532.9" stroke="#f6f4ea" stroke-width="2.5" fill="none" stroke-opacity="0.9"/>
<polyline points="751.3,438.9 729.5,475.0 728.2,538.0" stroke="#f6f4ea" stroke-width="2.5" fill="none" stroke-opacity="0.9"/>
<polyline points="775.1,444.0 753.3,480.0 751.8,543.1" stroke="#f6f4ea" stroke-width="2.5" fill="none" stroke-opacity="0.9"/>
<polyline points="798.8,449.3 777.0,485.1 775.4,548.2" stroke="#f6f4ea" stroke-width="2.5" fill="none" stroke-opacity="0.9"/>
<polyline points="822.5,454.6 800.7,490.3 799.0,553.5" stroke="#f6f4ea" stroke-width="2.5" fill="none" stroke-opacity="0.9"/>
<polyline points="846.3,459.9 824.4,495.5 822.6,558.8" stroke="#f6f4ea" stroke-width="2.5" fill="none" stroke-opacity="0.9"/>
<polyline points="870.0,465.3 848.2,500.8 846.2,564.1" stroke="#f6f4ea" stroke-width="2.5" fill="none" stroke-opacity="0.9"/>
<polyline points="893.7,470.8 871.9,506.2 869.7,569.5" stroke="#f6f4ea" stroke-width="2.5" fill="none" stroke-opacity="0.9"/>
<polyline points="917.5,476.3 895.6,511.6 893.3,575.0" stroke="#f6f4ea" stroke-width="2.5" fill="none" stroke-opacity="0.9"/>
<polyline points="941.2,481.9 919.3,517.0 916.9,580.5" stroke="#f6f4ea" stroke-width="2.5" fill="none" stroke-opacity="0.9"/>
<polyline points="964.9,487.5 943.0,522.5 940.5,586.1" stroke="#f6f4ea" stroke-width="2.5" fill="none" stroke-opacity="0.9"/>
<polyline points="988.7,493.1 966.8,528.0 964.1,591.6" stroke="#f6f4ea" stroke-width="2.5" fill="none" stroke-opacity="0.9"/>
<polyline points="1012.4,498.8 990.5,533.6 987.7,597.3" stroke="#f6f4ea" stroke-width="2.5" fill="none" stroke-opacity="0.9"/>
<polyline points="1036.1,504.5 1014.2,539.2 1011.3,602.9" stroke="#f6f4ea" stroke-width="2.5" fill="none" stroke-opacity="0.9"/>
<polyline points="1059.9,510.3 1037.9,544.8 1034.9,608.6" stroke="#f6f4ea" stroke-width="2.5" fill="none" stroke-opacity="0.9"/>
<polyline points="1083.6,516.0 1061.7,550.5 1058.5,614.4" stroke="#f6f4ea" stroke-width="2.5" fill="none" stroke-opacity="0.9"/>
<polyline points="1107.3,521.8 1085.4,556.1 1082.1,620.1" stroke="#f6f4ea" stroke-width="2.5" fill="none" stroke-opacity="0.9"/>
<polyline points="1131.1,527.6 1109.1,561.8 1105.6,625.9" stroke="#f6f4ea" stroke-width="2.5" fill="none" stroke-opacity="0.9"/>
<polyline points="1154.8,533.5 1132.8,567.5 1129.2,631.6" stroke="#f6f4ea" stroke-width="2.5" fill="none" stroke-opacity="0.9"/>
<polyline points="1178.5,539.3 1156.6,573.2 1152.8,637.4" stroke="#f6f4ea" stroke-width="2.5" fill="none" stroke-opacity="0.9"/>
<polyline points="1202.3,545.2 1180.3,579.0 1176.4,643.2" stroke="#f6f4ea" stroke-width="2.5" fill="none" stroke-opacity="0.9"/>
<polyline points="1226.0,551.0 1204.0,584.7 1200.0,649.0" stroke="#f6f4ea" stroke-width="2.5" fill="none" stroke-opacity="0.9"/>
<polygon points="1204.0,584.7 1226.0,551.0 1222.0,615.0 1200.0,649.0" stroke="#f6f4ea" stroke-width="2.5" fill="none" stroke-opacity="0.9"/>
<line x1="1202.0" y1="616.9" x2="1224.0" y2="583.0" stroke="#f6f4ea" stroke-width="2.5" fill="none" stroke-opacity="0.9"/>
<line x1="1215.0" y1="567.9" x2="1211.0" y2="632.0" stroke="#f6f4ea" stroke-width="2.5" fill="none" stroke-opacity="0.9"/>
</g>
</svg>

<!-- BEAMEND -->
<svg class="a" style="left:0;top:0" width="1418" height="897">
<path d="M1079,732.5 L1079,752 L1083.8,747.6 L1087.3,755.2 L1090.4,753.8 L1087,746.3 L1092.8,745.8 Z" fill="#f4f4f4" stroke="#f4f4f4" stroke-width="0.8"/>
<g font-family="Liberation Mono" font-size="13.5px" fill="#f0f0f0" font-weight="bold">
<text x="515.5" y="416" fill="#f0e0d8">MX</text>
<text x="538.5" y="437.5">X</text>
<text x="514.5" y="448" fill="#f0f0c0">MN</text>
<text x="503" y="402" fill="#70a040">Y</text>
</g>
<path d="M505,411 V442" stroke="#c8d830" stroke-width="2"/>
<path d="M505,443 L497,458" stroke="#40a0c0" stroke-width="1.6"/>
</svg>

</body></html>
